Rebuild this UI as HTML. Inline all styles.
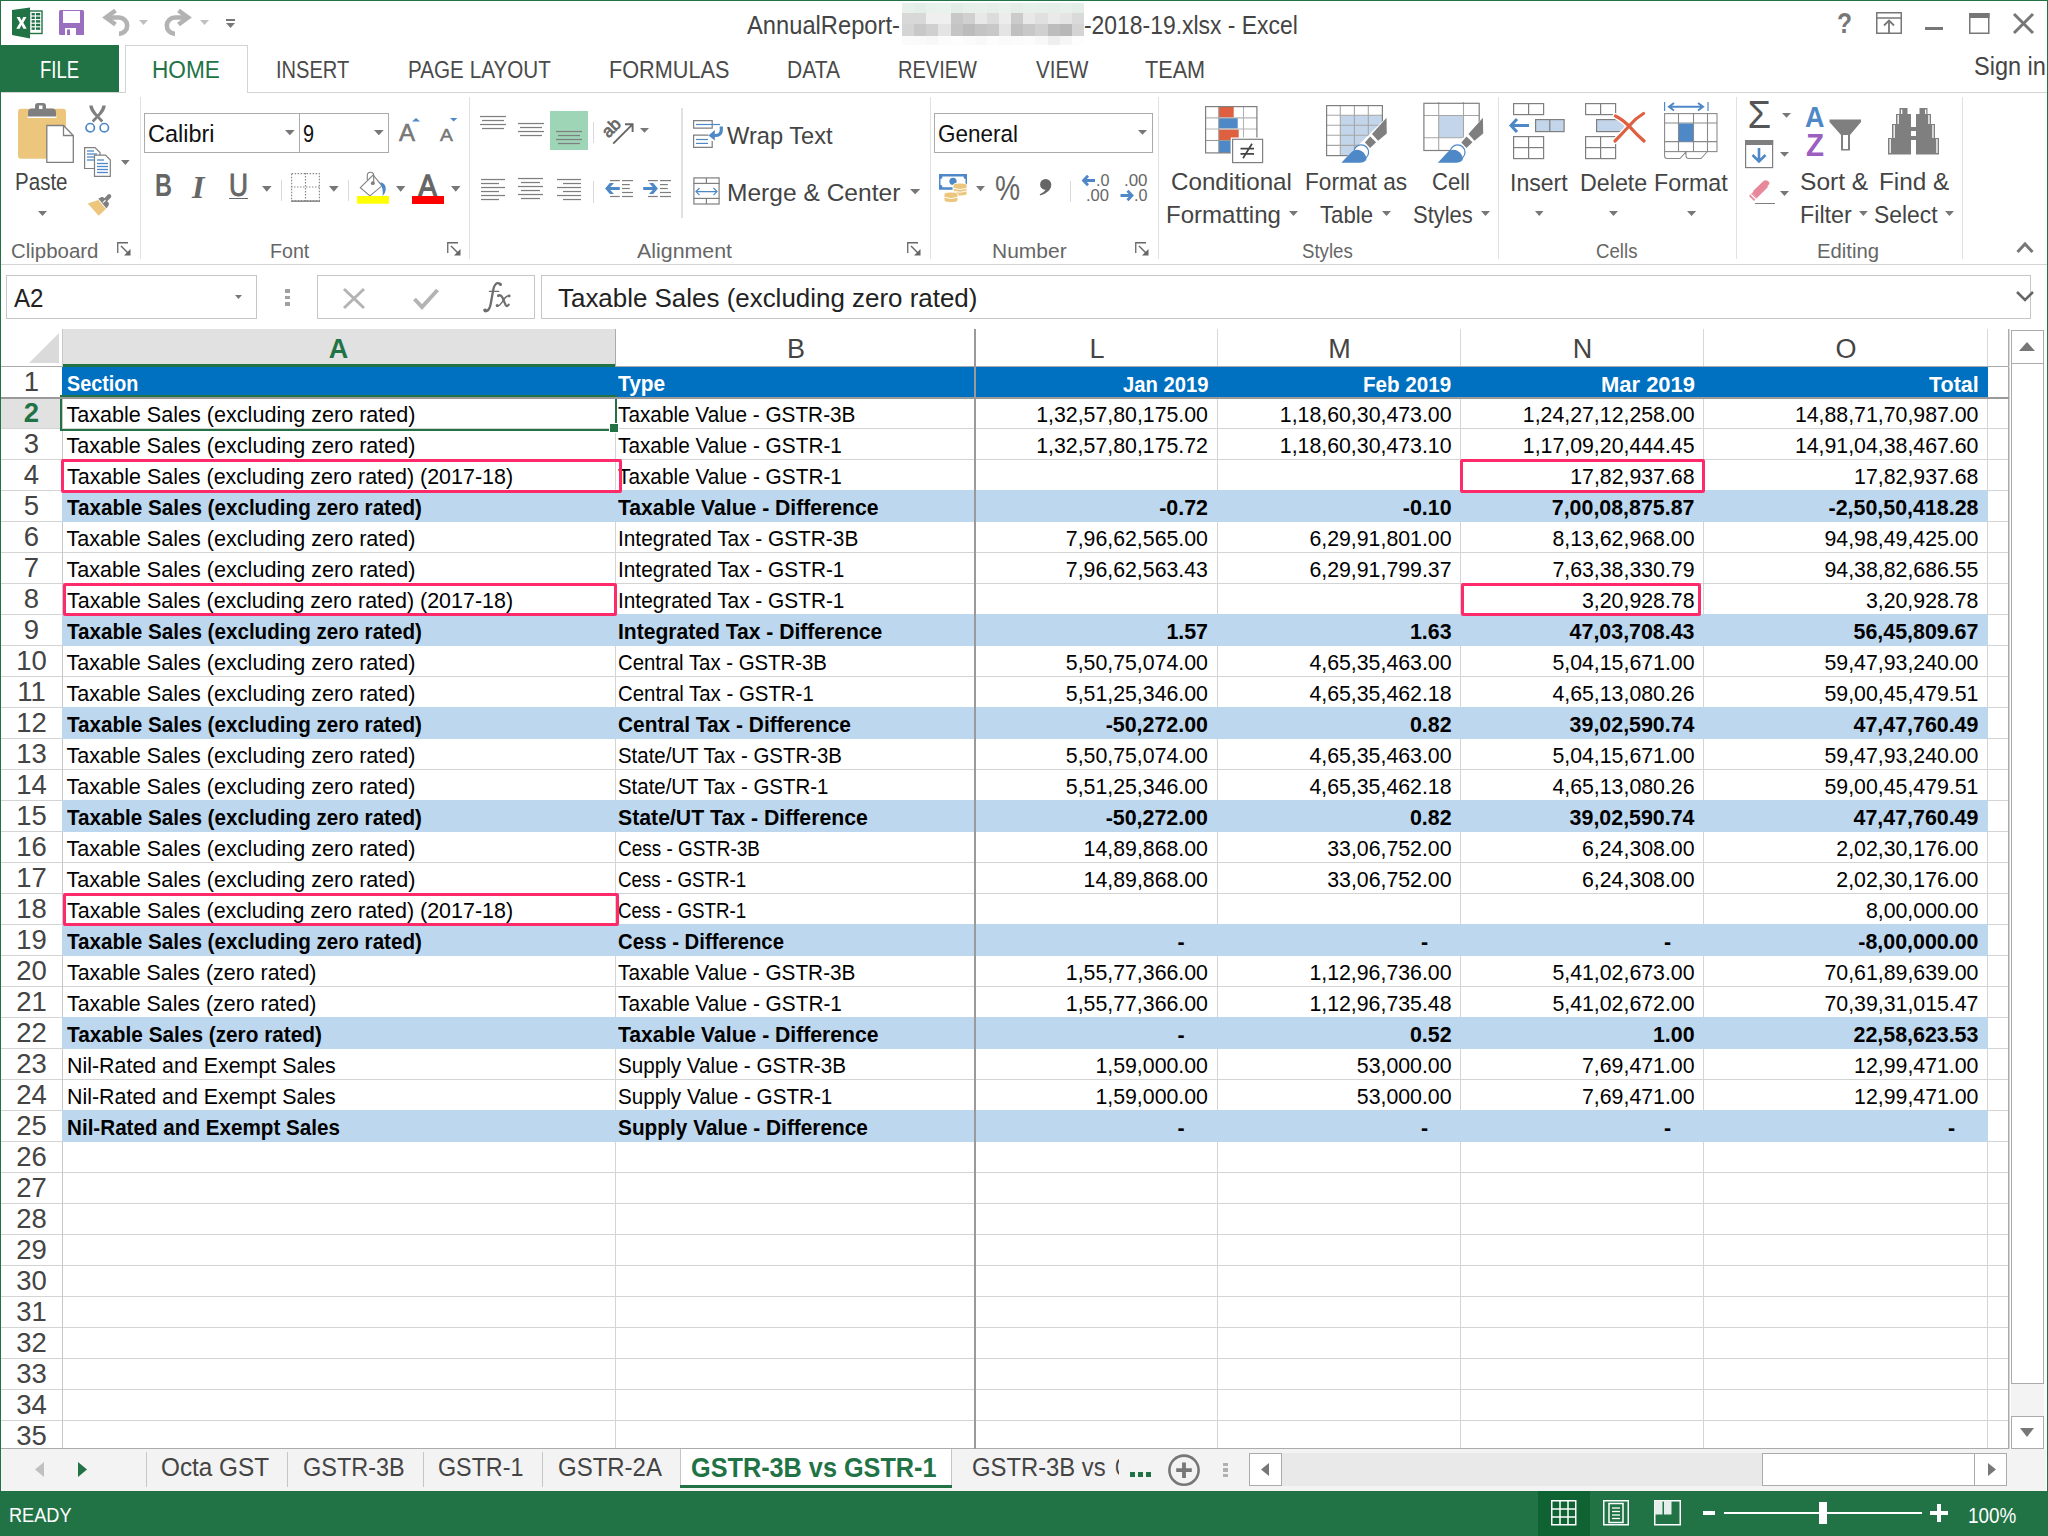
<!DOCTYPE html>
<html><head><meta charset="utf-8"><style>
html,body{margin:0;padding:0;}
body{width:2048px;height:1536px;overflow:hidden;position:relative;background:#fff;font-family:"Liberation Sans",sans-serif;}
.a{position:absolute;}
.t{position:absolute;white-space:pre;line-height:1;}
svg.a{overflow:visible;}
</style></head><body>
<svg class="a" style="left:12px;top:7px;" width="31" height="32" viewBox="0 0 31 32">
<rect x="17.5" y="4" width="12.5" height="22.5" fill="#fff" stroke="#217346" stroke-width="1.4"/>
<g fill="#217346"><rect x="19.6" y="6" width="3.2" height="2.4"/><rect x="24" y="6" width="4.2" height="2.4"/><rect x="19.6" y="9.6" width="3.2" height="2.4"/><rect x="24" y="9.6" width="4.2" height="2.4"/><rect x="19.6" y="13.2" width="3.2" height="2.4"/><rect x="24" y="13.2" width="4.2" height="2.4"/><rect x="19.6" y="16.8" width="3.2" height="2.4"/><rect x="24" y="16.8" width="4.2" height="2.4"/><rect x="19.6" y="20.4" width="3.2" height="2.4"/><rect x="24" y="20.4" width="4.2" height="2.4"/></g>
<polygon points="0,3 18,0.5 18,31.5 0,28" fill="#217346"/>
<path d="M4.5,10 H7.8 L9.5,13.6 L11.3,10 H14.5 L11.3,15.8 L14.7,21.8 H11.4 L9.5,18 L7.6,21.8 H4.3 L7.8,15.8Z" fill="#fff"/>
</svg>
<svg class="a" style="left:59px;top:10px;" width="25" height="25" viewBox="0 0 25 25"><path d="M1.5,0 H23.5 Q25,0 25,1.5 V25 H1.5 Q0,25 0,23.5 V1.5 Q0,0 1.5,0Z" fill="#9b6fc0"/>
<rect x="4" y="1" width="17" height="12" fill="#fff"/><rect x="6" y="18" width="11" height="7" fill="#fff"/><rect x="8" y="19.5" width="3" height="5.5" fill="#9b6fc0"/></svg>
<svg class="a" style="left:103px;top:9px;" width="27" height="27" viewBox="0 0 27 27"><path d="M12.5,1.5 L3,8.5 L12.5,15.5" fill="none" stroke="#b3b3b3" stroke-width="4.6" stroke-linejoin="miter" stroke-miterlimit="10"/>
<path d="M4,8.5 H16 A8.2,8.2 0 0 1 16,24.9" fill="none" stroke="#b3b3b3" stroke-width="4.6"/></svg>
<svg class="a" style="left:139px;top:20px;" width="9" height="5" viewBox="0 0 9 5"><polygon points="0,0 9,0 4.5,5" fill="#c0c0c0"/></svg>
<svg class="a" style="left:165px;top:9px;" width="27" height="27" viewBox="0 0 27 27"><path d="M13.5,1.5 L23,8.5 L13.5,15.5" fill="none" stroke="#b3b3b3" stroke-width="4.6" stroke-linejoin="miter" stroke-miterlimit="10"/>
<path d="M22,8.5 H10 A8.2,8.2 0 0 0 10,24.9" fill="none" stroke="#b3b3b3" stroke-width="4.6"/></svg>
<svg class="a" style="left:200px;top:20px;" width="9" height="5" viewBox="0 0 9 5"><polygon points="0,0 9,0 4.5,5" fill="#c0c0c0"/></svg>
<div class="a" style="left:226px;top:19px;width:9px;height:1.5px;background:#777;"></div>
<svg class="a" style="left:226px;top:23px;" width="9" height="5" viewBox="0 0 9 5"><polygon points="0,0 9,0 4.5,5" fill="#777"/></svg>
<div class="t" style="left:747.30px;top:11.50px;font-size:26.16px;color:#444444;transform:scaleX(0.9067);transform-origin:0 0;">AnnualReport-</div>
<div class="t" style="left:1084.00px;top:11.50px;font-size:26.16px;color:#444444;transform:scaleX(0.8754);transform-origin:0 0;">-2018-19.xlsx - Excel</div>
<div class="a" style="left:902.0px;top:3px;width:12.2px;height:9.5px;background:#e8f0eb;"></div>
<div class="a" style="left:902.0px;top:12.5px;width:12.2px;height:11.7px;background:#d8d8d8;"></div>
<div class="a" style="left:902.0px;top:24.2px;width:12.2px;height:11.7px;background:#d4d4d4;"></div>
<div class="a" style="left:902.0px;top:35.9px;width:12.2px;height:8.8px;background:#fbfbfb;"></div>
<div class="a" style="left:914.13px;top:3px;width:12.2px;height:9.5px;background:#e4eee8;"></div>
<div class="a" style="left:914.13px;top:12.5px;width:12.2px;height:11.7px;background:#d8d8d8;"></div>
<div class="a" style="left:914.13px;top:24.2px;width:12.2px;height:11.7px;background:#c8c8c8;"></div>
<div class="a" style="left:914.13px;top:35.9px;width:12.2px;height:8.8px;background:#fafafa;"></div>
<div class="a" style="left:926.26px;top:3px;width:12.2px;height:9.5px;background:#e9f1ec;"></div>
<div class="a" style="left:926.26px;top:12.5px;width:12.2px;height:11.7px;background:#efefef;"></div>
<div class="a" style="left:926.26px;top:24.2px;width:12.2px;height:11.7px;background:#d0d0d0;"></div>
<div class="a" style="left:926.26px;top:35.9px;width:12.2px;height:8.8px;background:#f8f8f8;"></div>
<div class="a" style="left:938.39px;top:3px;width:12.2px;height:9.5px;background:#eaf2ed;"></div>
<div class="a" style="left:938.39px;top:12.5px;width:12.2px;height:11.7px;background:#efefef;"></div>
<div class="a" style="left:938.39px;top:24.2px;width:12.2px;height:11.7px;background:#e4e4e4;"></div>
<div class="a" style="left:938.39px;top:35.9px;width:12.2px;height:8.8px;background:#fcfcfc;"></div>
<div class="a" style="left:950.52px;top:3px;width:12.2px;height:9.5px;background:#e3ede7;"></div>
<div class="a" style="left:950.52px;top:12.5px;width:12.2px;height:11.7px;background:#c8c8c8;"></div>
<div class="a" style="left:950.52px;top:24.2px;width:12.2px;height:11.7px;background:#c4c4c4;"></div>
<div class="a" style="left:950.52px;top:35.9px;width:12.2px;height:8.8px;background:#fdfdfd;"></div>
<div class="a" style="left:962.65px;top:3px;width:12.2px;height:9.5px;background:#e6efe9;"></div>
<div class="a" style="left:962.65px;top:12.5px;width:12.2px;height:11.7px;background:#d0d0d0;"></div>
<div class="a" style="left:962.65px;top:24.2px;width:12.2px;height:11.7px;background:#bcbcbc;"></div>
<div class="a" style="left:962.65px;top:35.9px;width:12.2px;height:8.8px;background:#fbfbfb;"></div>
<div class="a" style="left:974.78px;top:3px;width:12.2px;height:9.5px;background:#e9f0ec;"></div>
<div class="a" style="left:974.78px;top:12.5px;width:12.2px;height:11.7px;background:#e8e8e8;"></div>
<div class="a" style="left:974.78px;top:24.2px;width:12.2px;height:11.7px;background:#c4c4c4;"></div>
<div class="a" style="left:974.78px;top:35.9px;width:12.2px;height:8.8px;background:#f9f9f9;"></div>
<div class="a" style="left:986.91px;top:3px;width:12.2px;height:9.5px;background:#e5eee8;"></div>
<div class="a" style="left:986.91px;top:12.5px;width:12.2px;height:11.7px;background:#dcdcdc;"></div>
<div class="a" style="left:986.91px;top:24.2px;width:12.2px;height:11.7px;background:#c8c8c8;"></div>
<div class="a" style="left:986.91px;top:35.9px;width:12.2px;height:8.8px;background:#fdfdfd;"></div>
<div class="a" style="left:999.04px;top:3px;width:12.2px;height:9.5px;background:#eaf1ed;"></div>
<div class="a" style="left:999.04px;top:12.5px;width:12.2px;height:11.7px;background:#ececec;"></div>
<div class="a" style="left:999.04px;top:24.2px;width:12.2px;height:11.7px;background:#e4e4e4;"></div>
<div class="a" style="left:999.04px;top:35.9px;width:12.2px;height:8.8px;background:#fafafa;"></div>
<div class="a" style="left:1011.17px;top:3px;width:12.2px;height:9.5px;background:#e4ede7;"></div>
<div class="a" style="left:1011.17px;top:12.5px;width:12.2px;height:11.7px;background:#cbcbcb;"></div>
<div class="a" style="left:1011.17px;top:24.2px;width:12.2px;height:11.7px;background:#c0c0c0;"></div>
<div class="a" style="left:1011.17px;top:35.9px;width:12.2px;height:8.8px;background:#fbfbfb;"></div>
<div class="a" style="left:1023.3px;top:3px;width:12.2px;height:9.5px;background:#e8f0eb;"></div>
<div class="a" style="left:1023.3px;top:12.5px;width:12.2px;height:11.7px;background:#e8e8e8;"></div>
<div class="a" style="left:1023.3px;top:24.2px;width:12.2px;height:11.7px;background:#c8c8c8;"></div>
<div class="a" style="left:1023.3px;top:35.9px;width:12.2px;height:8.8px;background:#fcfcfc;"></div>
<div class="a" style="left:1035.43px;top:3px;width:12.2px;height:9.5px;background:#e6efe9;"></div>
<div class="a" style="left:1035.43px;top:12.5px;width:12.2px;height:11.7px;background:#e0e0e0;"></div>
<div class="a" style="left:1035.43px;top:24.2px;width:12.2px;height:11.7px;background:#d0d0d0;"></div>
<div class="a" style="left:1035.43px;top:35.9px;width:12.2px;height:8.8px;background:#f8f8f8;"></div>
<div class="a" style="left:1047.56px;top:3px;width:12.2px;height:9.5px;background:#e5eee8;"></div>
<div class="a" style="left:1047.56px;top:12.5px;width:12.2px;height:11.7px;background:#eaeaea;"></div>
<div class="a" style="left:1047.56px;top:24.2px;width:12.2px;height:11.7px;background:#bdbdbd;"></div>
<div class="a" style="left:1047.56px;top:35.9px;width:12.2px;height:8.8px;background:#eeeeee;"></div>
<div class="a" style="left:1059.69px;top:3px;width:12.2px;height:9.5px;background:#e8f0eb;"></div>
<div class="a" style="left:1059.69px;top:12.5px;width:12.2px;height:11.7px;background:#e4e4e4;"></div>
<div class="a" style="left:1059.69px;top:24.2px;width:12.2px;height:11.7px;background:#b8b8b8;"></div>
<div class="a" style="left:1059.69px;top:35.9px;width:12.2px;height:8.8px;background:#f6f6f6;"></div>
<div class="a" style="left:1071.82px;top:3px;width:12.2px;height:9.5px;background:#e4ede8;"></div>
<div class="a" style="left:1071.82px;top:12.5px;width:12.2px;height:11.7px;background:#dadada;"></div>
<div class="a" style="left:1071.82px;top:24.2px;width:12.2px;height:11.7px;background:#d4d4d4;"></div>
<div class="a" style="left:1071.82px;top:35.9px;width:12.2px;height:8.8px;background:#fdfdfd;"></div>
<div class="t" style="left:1836.70px;top:8.54px;font-size:29.07px;color:#777;font-weight:bold;transform:scaleX(0.8459);transform-origin:0 0;">?</div>
<svg class="a" style="left:1876px;top:12px;" width="26" height="22" viewBox="0 0 26 22"><rect x="0.75" y="0.75" width="24.5" height="20.5" fill="none" stroke="#777" stroke-width="1.5"/>
<line x1="0.75" y1="6" x2="25" y2="6" stroke="#777" stroke-width="1.5"/>
<line x1="13" y1="9" x2="13" y2="21" stroke="#777" stroke-width="1.8"/><path d="M8,13.5 Q11,10.5 13,8.5 Q15,10.5 18,13.5" fill="none" stroke="#777" stroke-width="1.8"/></svg>
<div class="a" style="left:1925px;top:26.5px;width:18px;height:3.5px;background:#777;"></div>
<svg class="a" style="left:1969px;top:12.5px;" width="21" height="21" viewBox="0 0 21 21"><rect x="0.75" y="0.75" width="19" height="19.5" fill="none" stroke="#777" stroke-width="1.5"/><rect x="0" y="0" width="20.5" height="5" fill="#777"/></svg>
<svg class="a" style="left:2013px;top:12.5px;" width="21" height="21" viewBox="0 0 21 21"><path d="M1,1 L20,20 M20,1 L1,20" stroke="#777" stroke-width="3"/></svg>
<div class="t" style="left:1974.00px;top:54.16px;font-size:25.15px;color:#444444;transform:scaleX(0.9357);transform-origin:0 0;">Sign in</div>
<div class="a" style="left:0px;top:45px;width:119px;height:48px;background:#217346;"></div>
<div class="t" style="left:40.25px;top:59.16px;font-size:23.26px;color:#fff;transform:scaleX(0.7968);transform-origin:0 0;">FILE</div>
<div class="a" style="left:125px;top:45px;width:122.5px;height:48px;background:#fff;border:1px solid #d4d4d4;border-bottom:none;box-sizing:border-box;"></div>
<div class="t" style="left:151.70px;top:57.75px;font-size:24.56px;color:#217346;transform:scaleX(0.9214);transform-origin:0 0;">HOME</div>
<div class="t" style="left:276.20px;top:57.75px;font-size:24.56px;color:#4a4a4a;transform:scaleX(0.8175);transform-origin:0 0;">INSERT</div>
<div class="t" style="left:408.00px;top:57.75px;font-size:24.56px;color:#4a4a4a;transform:scaleX(0.8419);transform-origin:0 0;">PAGE LAYOUT</div>
<div class="t" style="left:608.50px;top:57.75px;font-size:24.56px;color:#4a4a4a;transform:scaleX(0.8831);transform-origin:0 0;">FORMULAS</div>
<div class="t" style="left:787.00px;top:57.75px;font-size:24.56px;color:#4a4a4a;transform:scaleX(0.8562);transform-origin:0 0;">DATA</div>
<div class="t" style="left:898.00px;top:57.75px;font-size:24.56px;color:#4a4a4a;transform:scaleX(0.8152);transform-origin:0 0;">REVIEW</div>
<div class="t" style="left:1035.50px;top:57.75px;font-size:24.56px;color:#4a4a4a;transform:scaleX(0.8365);transform-origin:0 0;">VIEW</div>
<div class="t" style="left:1144.80px;top:57.75px;font-size:24.56px;color:#4a4a4a;transform:scaleX(0.8816);transform-origin:0 0;">TEAM</div>
<div class="a" style="left:0px;top:92px;width:125px;height:1px;background:#d4d4d4;"></div>
<div class="a" style="left:247px;top:92px;width:1801px;height:1px;background:#d4d4d4;"></div>
<div class="a" style="left:0px;top:264px;width:2048px;height:1px;background:#d4d4d4;"></div>
<div class="a" style="left:6px;top:275px;width:251px;height:44px;background:#fff;border:1px solid #c6c6c6;box-sizing:border-box;"></div>
<div class="t" style="left:13.70px;top:285.71px;font-size:25.44px;color:#222;transform:scaleX(0.9468);transform-origin:0 0;">A2</div>
<svg class="a" style="left:235px;top:295px;" width="7" height="4" viewBox="0 0 7 4"><polygon points="0,0 7,0 3.5,4" fill="#777"/></svg>
<div class="a" style="left:285px;top:289px;width:4.5px;height:3.5px;background:#a0a0a0;"></div>
<div class="a" style="left:285px;top:295.5px;width:4.5px;height:3.5px;background:#a0a0a0;"></div>
<div class="a" style="left:285px;top:302px;width:4.5px;height:3.5px;background:#a0a0a0;"></div>
<div class="a" style="left:317px;top:275px;width:218px;height:44px;background:#fff;border:1px solid #c6c6c6;box-sizing:border-box;"></div>
<svg class="a" style="left:343px;top:288px;" width="22" height="21" viewBox="0 0 22 21"><path d="M1,1 L21,20 M21,1 L1,20" stroke="#b4b4b4" stroke-width="3"/></svg>
<svg class="a" style="left:413px;top:288px;" width="26" height="21" viewBox="0 0 26 21"><path d="M1.5,11 L9,19 L24.5,2" fill="none" stroke="#b4b4b4" stroke-width="4"/></svg>
<svg class="a" style="left:470px;top:275px;" width="60" height="45" viewBox="0 0 60 45"><g fill="none" stroke="#6e6e6e" stroke-linecap="round"><path d="M30.8,9.6 Q29.5,7.6 27,8.2 Q24.2,9.4 23.2,15 L20.8,28.5 Q19.6,35.3 16.2,36.2 Q14.6,36.5 14.4,35" stroke-width="2.3"/><line x1="19.4" y1="16.4" x2="28.8" y2="16.4" stroke-width="1.3"/><path d="M28.2,20.6 Q30.8,19.2 32.6,22.8 L35.6,30 Q36.8,32.3 38.7,29.6" stroke-width="2.2"/><path d="M39.3,20.4 Q36.3,20.6 33.4,25 Q30.4,30.6 27.4,31.2" stroke-width="1.5"/></g><g fill="#6e6e6e"><circle cx="30.2" cy="9.3" r="1.5"/><circle cx="15.4" cy="35.2" r="1.6"/><circle cx="28.4" cy="20.8" r="1.4"/><circle cx="39.2" cy="21" r="1.4"/><circle cx="27.2" cy="30.6" r="1.5"/></g></svg>
<div class="a" style="left:541px;top:275px;width:1490px;height:44px;background:#fff;border:1px solid #c6c6c6;box-sizing:border-box;"></div>
<div class="t" style="left:557.50px;top:284.80px;font-size:26.16px;color:#222;transform:scaleX(0.9913);transform-origin:0 0;">Taxable Sales (excluding zero rated)</div>
<svg class="a" style="left:2016px;top:291px;" width="18" height="11" viewBox="0 0 18 11"><path d="M1,1 L9,9 L17,1" fill="none" stroke="#666" stroke-width="2.5"/></svg>
<div class="a" style="left:1px;top:1449px;width:2045px;height:42px;background:#f3f3f3;"></div>
<svg class="a" style="left:35px;top:1462px;" width="9" height="15" viewBox="0 0 9 15"><polygon points="9,0 9,15 0,7.5" fill="#c0c0c0"/></svg>
<svg class="a" style="left:78px;top:1462px;" width="9" height="15" viewBox="0 0 9 15"><polygon points="0,0 0,15 9,7.5" fill="#217346"/></svg>
<div class="a" style="left:146px;top:1452px;width:1px;height:35px;background:#c6c6c6;"></div>
<div class="a" style="left:286.5px;top:1452px;width:1px;height:35px;background:#c6c6c6;"></div>
<div class="a" style="left:422.5px;top:1452px;width:1px;height:35px;background:#c6c6c6;"></div>
<div class="a" style="left:541.5px;top:1452px;width:1px;height:35px;background:#c6c6c6;"></div>
<div class="t" style="left:161.30px;top:1455.11px;font-size:25.44px;color:#444444;transform:scaleX(0.9552);transform-origin:0 0;">Octa GST</div>
<div class="t" style="left:303.00px;top:1455.11px;font-size:25.44px;color:#444444;transform:scaleX(0.9223);transform-origin:0 0;">GSTR-3B</div>
<div class="t" style="left:437.50px;top:1455.11px;font-size:25.44px;color:#444444;transform:scaleX(0.9150);transform-origin:0 0;">GSTR-1</div>
<div class="t" style="left:557.80px;top:1455.11px;font-size:25.44px;color:#444444;transform:scaleX(0.9423);transform-origin:0 0;">GSTR-2A</div>
<div class="a" style="left:679.5px;top:1448px;width:272.5px;height:40px;background:#fff;border:1px solid #c6c6c6;border-top:none;box-sizing:border-box;"></div>
<div class="a" style="left:679.5px;top:1485px;width:272.5px;height:3px;background:#217346;"></div>
<div class="t" style="left:691.40px;top:1453.87px;font-size:27.62px;color:#217346;font-weight:bold;transform:scaleX(0.9145);transform-origin:0 0;">GSTR-3B vs GSTR-1</div>
<div class="t" style="left:972.30px;top:1455.11px;font-size:25.44px;color:#444444;transform:scaleX(0.9363);transform-origin:0 0;">GSTR-3B vs</div>
<div class="t" style="left:1115.00px;top:1455.11px;font-size:25.44px;color:#444444;transform:scaleX(0.7560);transform-origin:0 0;">G</div>
<div class="a" style="left:1119px;top:1449px;width:10px;height:37px;background:#f3f3f3;"></div>
<div class="a" style="left:1130px;top:1472px;width:4.5px;height:5px;background:#217346;"></div>
<div class="a" style="left:1138px;top:1472px;width:4.5px;height:5px;background:#217346;"></div>
<div class="a" style="left:1146px;top:1472px;width:4.5px;height:5px;background:#217346;"></div>
<svg class="a" style="left:1168px;top:1454px;" width="33" height="33" viewBox="0 0 33 33"><circle cx="16" cy="16.2" r="14.6" fill="none" stroke="#777" stroke-width="2.6"/><path d="M16,8.5 V24 M8.2,16.2 H23.8" stroke="#777" stroke-width="3.8"/></svg>
<div class="a" style="left:1223px;top:1462.5px;width:5px;height:3.5px;background:#b0b0b0;"></div>
<div class="a" style="left:1223px;top:1468px;width:5px;height:3.5px;background:#b0b0b0;"></div>
<div class="a" style="left:1223px;top:1473.5px;width:5px;height:3.5px;background:#b0b0b0;"></div>
<div class="a" style="left:1249px;top:1453px;width:758px;height:33px;background:#e9e9e9;"></div>
<div class="a" style="left:1249px;top:1453px;width:33px;height:33px;background:#fff;border:1px solid #ababab;box-sizing:border-box;"></div>
<svg class="a" style="left:1261px;top:1463px;" width="8" height="13" viewBox="0 0 8 13"><polygon points="8,0 8,13 0,6.5" fill="#777"/></svg>
<div class="a" style="left:1762px;top:1453px;width:213px;height:33px;background:#fff;border:1px solid #ababab;box-sizing:border-box;"></div>
<div class="a" style="left:1974px;top:1453px;width:33px;height:33px;background:#fff;border:1px solid #ababab;box-sizing:border-box;"></div>
<svg class="a" style="left:1988px;top:1463px;" width="8" height="13" viewBox="0 0 8 13"><polygon points="0,0 0,13 8,6.5" fill="#777"/></svg>
<div class="a" style="left:0px;top:1491px;width:2048px;height:45px;background:#217346;"></div>
<div class="t" style="left:9.00px;top:1503.86px;font-size:21.08px;color:#fff;transform:scaleX(0.8622);transform-origin:0 0;">READY</div>
<div class="a" style="left:1538px;top:1491px;width:52px;height:45px;background:#0f6333;"></div>
<svg class="a" style="left:1551px;top:1500px;" width="26" height="26" viewBox="0 0 26 26"><g fill="none" stroke="#fff" stroke-width="1.5"><rect x="0.75" y="0.75" width="24" height="24"/><line x1="9" y1="0" x2="9" y2="25"/><line x1="17" y1="0" x2="17" y2="25"/><line x1="0" y1="9" x2="25" y2="9"/><line x1="0" y1="17" x2="25" y2="17"/></g></svg>
<svg class="a" style="left:1603px;top:1500px;" width="26" height="26" viewBox="0 0 26 26"><g fill="none" stroke="#fff" stroke-width="1.5"><rect x="0.75" y="0.75" width="24.5" height="24"/><rect x="6" y="3.5" width="14" height="19"/></g><g stroke="#fff" stroke-width="1.3"><line x1="9" y1="8" x2="17" y2="8"/><line x1="9" y1="11.5" x2="17" y2="11.5"/><line x1="9" y1="15" x2="17" y2="15"/><line x1="9" y1="18.5" x2="17" y2="18.5"/></g></svg>
<svg class="a" style="left:1654px;top:1500px;" width="27" height="26" viewBox="0 0 27 26"><rect x="0.75" y="0.75" width="25.5" height="24" fill="none" stroke="#fff" stroke-width="1.5"/><rect x="0.5" y="0.5" width="8" height="14" fill="#e6eee9"/><rect x="10" y="0.5" width="7.5" height="14" fill="#e6eee9"/></svg>
<div class="a" style="left:1703px;top:1510.5px;width:12px;height:4.5px;background:#fff;"></div>
<div class="a" style="left:1724px;top:1512px;width:198px;height:2px;background:#fff;"></div>
<div class="a" style="left:1819px;top:1502px;width:8px;height:22px;background:#fff;"></div>
<svg class="a" style="left:1930px;top:1504px;" width="18" height="18" viewBox="0 0 18 18"><path d="M9,0 V18 M0,9 H18" stroke="#fff" stroke-width="4"/></svg>
<div class="t" style="left:1968.00px;top:1504.54px;font-size:21.80px;color:#fff;transform:scaleX(0.8654);transform-origin:0 0;">100%</div>
<div class="a" style="left:2011px;top:330px;width:33px;height:1119px;background:#f3f3f3;"></div>
<div class="a" style="left:2011px;top:330px;width:33px;height:34px;background:#fff;border:1px solid #ababab;box-sizing:border-box;"></div>
<svg class="a" style="left:2019px;top:342px;" width="16" height="9" viewBox="0 0 16 9"><polygon points="0,9 16,9 8,0" fill="#777"/></svg>
<div class="a" style="left:2011px;top:363px;width:33px;height:1021px;background:#fff;border:1px solid #ababab;box-sizing:border-box;"></div>
<div class="a" style="left:2011px;top:1416px;width:33px;height:33px;background:#fff;border:1px solid #ababab;box-sizing:border-box;"></div>
<svg class="a" style="left:2020px;top:1428px;" width="14" height="9" viewBox="0 0 14 9"><polygon points="0,0 14,0 7,9" fill="#777"/></svg>
<div class="a" style="left:139.5px;top:97px;width:1px;height:162px;background:#e1e1e1;"></div>
<div class="a" style="left:468.5px;top:97px;width:1px;height:162px;background:#e1e1e1;"></div>
<div class="a" style="left:929.5px;top:97px;width:1px;height:162px;background:#e1e1e1;"></div>
<div class="a" style="left:1157.5px;top:97px;width:1px;height:162px;background:#e1e1e1;"></div>
<div class="a" style="left:1497.5px;top:97px;width:1px;height:162px;background:#e1e1e1;"></div>
<div class="a" style="left:1735.5px;top:97px;width:1px;height:162px;background:#e1e1e1;"></div>
<div class="a" style="left:1961.5px;top:97px;width:1px;height:162px;background:#e1e1e1;"></div>
<div class="t" style="left:10.80px;top:239.66px;font-size:21.08px;color:#666666;transform:scaleX(0.9689);transform-origin:0 0;">Clipboard</div>
<div class="t" style="left:269.70px;top:239.66px;font-size:21.08px;color:#666666;transform:scaleX(0.9300);transform-origin:0 0;">Font</div>
<div class="t" style="left:636.70px;top:239.66px;font-size:21.08px;color:#666666;transform:scaleX(1.0141);transform-origin:0 0;">Alignment</div>
<div class="t" style="left:991.60px;top:239.66px;font-size:21.08px;color:#666666;transform:scaleX(0.9957);transform-origin:0 0;">Number</div>
<div class="t" style="left:1301.60px;top:239.66px;font-size:21.08px;color:#666666;transform:scaleX(0.8845);transform-origin:0 0;">Styles</div>
<div class="t" style="left:1595.70px;top:239.66px;font-size:21.08px;color:#666666;transform:scaleX(0.8850);transform-origin:0 0;">Cells</div>
<div class="t" style="left:1817.30px;top:239.66px;font-size:21.08px;color:#666666;transform:scaleX(0.9629);transform-origin:0 0;">Editing</div>
<svg class="a" style="left:117px;top:242px;" width="14" height="14" viewBox="0 0 14 14"><path d="M0.75,11 V0.75 H11" fill="none" stroke="#666666" stroke-width="1.3"/><path d="M4,4 L12,12" stroke="#666666" stroke-width="1.5"/><polygon points="13.5,7 13.5,13.5 7,13.5" fill="#666666"/></svg>
<svg class="a" style="left:447px;top:242px;" width="14" height="14" viewBox="0 0 14 14"><path d="M0.75,11 V0.75 H11" fill="none" stroke="#666666" stroke-width="1.3"/><path d="M4,4 L12,12" stroke="#666666" stroke-width="1.5"/><polygon points="13.5,7 13.5,13.5 7,13.5" fill="#666666"/></svg>
<svg class="a" style="left:907px;top:242px;" width="14" height="14" viewBox="0 0 14 14"><path d="M0.75,11 V0.75 H11" fill="none" stroke="#666666" stroke-width="1.3"/><path d="M4,4 L12,12" stroke="#666666" stroke-width="1.5"/><polygon points="13.5,7 13.5,13.5 7,13.5" fill="#666666"/></svg>
<svg class="a" style="left:1135px;top:242px;" width="14" height="14" viewBox="0 0 14 14"><path d="M0.75,11 V0.75 H11" fill="none" stroke="#666666" stroke-width="1.3"/><path d="M4,4 L12,12" stroke="#666666" stroke-width="1.5"/><polygon points="13.5,7 13.5,13.5 7,13.5" fill="#666666"/></svg>
<svg class="a" style="left:2016px;top:242px;" width="18" height="11" viewBox="0 0 18 11"><path d="M1.5,10 L9,2 L16.5,10" fill="none" stroke="#777" stroke-width="3"/></svg>
<svg class="a" style="left:18px;top:103px;" width="56" height="60" viewBox="0 0 56 60">
<rect x="0" y="5.8" width="48" height="50" rx="3" fill="#edc67e"/>
<path d="M10,9 Q10,5.5 14,5.5 H17 V3 Q17,0 20,0 H25 Q28,0 28,3 V5.5 H34 Q38,5.5 38,9 V14 H10Z" fill="#7f7f7f"/>
<rect x="21" y="2.5" width="3.5" height="3.5" fill="#fff"/>
<rect x="9.5" y="13.5" width="29" height="1.5" fill="#fff"/>
<path d="M28.8,22.5 H45.5 L55.3,32.5 V59.3 H28.8Z" fill="#fff" stroke="#7f7f7f" stroke-width="1.3"/>
<path d="M45.5,22.5 V32.5 H55.3" fill="none" stroke="#7f7f7f" stroke-width="1.3"/>
</svg>
<div class="t" style="left:15.20px;top:170.69px;font-size:23.69px;color:#444444;transform:scaleX(0.8673);transform-origin:0 0;">Paste</div>
<svg class="a" style="left:38px;top:211px;" width="9" height="5" viewBox="0 0 9 5"><polygon points="0,0 9,0 4.5,5" fill="#777777"/></svg>
<svg class="a" style="left:85px;top:105px;" width="25" height="28" viewBox="0 0 25 28">
<path d="M4.3,0.4 L7.6,0.4 Q8.5,5 13.5,10.5 L18.3,15.5 L16.3,17.5 L11.2,12 Q4.2,5.5 4.3,0.4Z" fill="#7f7f7f"/>
<path d="M20.7,0.4 L17.4,0.4 Q16.5,5 11.5,10.5 L6.7,15.5 L8.7,17.5 L13.8,12 Q20.8,5.5 20.7,0.4Z" fill="#7f7f7f"/>
<circle cx="5.2" cy="22.7" r="4.2" fill="#fff" stroke="#4e88c7" stroke-width="1.7"/>
<circle cx="19.3" cy="22.7" r="4.2" fill="#fff" stroke="#4e88c7" stroke-width="1.7"/>
</svg>
<svg class="a" style="left:84px;top:147px;" width="27" height="30" viewBox="0 0 27 30">
<path d="M0.6,0.6 H11 L16,5.6 V21.5 H0.6Z" fill="#fff" stroke="#7f7f7f" stroke-width="1.2"/>
<g stroke="#4e88c7" stroke-width="1.3"><line x1="3" y1="4" x2="10" y2="4"/><line x1="3" y1="7" x2="13" y2="7"/><line x1="3" y1="10" x2="13" y2="10"/><line x1="3" y1="13" x2="13" y2="13"/></g>
<path d="M10.5,8.2 H21.5 L26.3,13 V29.3 H10.5Z" fill="#fff" stroke="#7f7f7f" stroke-width="1.2"/>
<g stroke="#4e88c7" stroke-width="1.3"><line x1="13" y1="13" x2="20" y2="13"/><line x1="13" y1="16.5" x2="24" y2="16.5"/><line x1="13" y1="19.5" x2="24" y2="19.5"/><line x1="13" y1="22.5" x2="24" y2="22.5"/><line x1="13" y1="25.5" x2="24" y2="25.5"/></g>
</svg>
<svg class="a" style="left:121.3px;top:160px;" width="8.700000000000003" height="5" viewBox="0 0 8.700000000000003 5"><polygon points="0,0 8.700000000000003,0 4.350000000000001,5" fill="#777777"/></svg>
<svg class="a" style="left:86px;top:193px;" width="25" height="24" viewBox="0 0 25 24">
<polygon points="1.7,10.5 12.3,7.1 19.9,16 12.7,22.8" fill="#edc67e"/>
<path d="M12.3,5.4 L15.7,4.1 Q17,3.8 18,4.8 L22.4,9.5 Q23.3,10.5 22.8,12 L20.5,15.5 Z" fill="#7f7f7f"/>
<line x1="19.2" y1="7.4" x2="23.2" y2="3.2" stroke="#7f7f7f" stroke-width="4.2" stroke-linecap="round"/>
<line x1="17" y1="9.6" x2="19.5" y2="7.1" stroke="#fff" stroke-width="1.2"/>
</svg>
<div class="a" style="left:144px;top:113px;width:156px;height:40px;background:#fff;border:1px solid #ababab;box-sizing:border-box;"></div>
<div class="a" style="left:299px;top:113px;width:90px;height:40px;background:#fff;border:1px solid #ababab;box-sizing:border-box;"></div>
<div class="t" style="left:147.80px;top:123.31px;font-size:23.55px;color:#111;transform:scaleX(0.9962);transform-origin:0 0;">Calibri</div>
<div class="t" style="left:303.00px;top:123.31px;font-size:23.55px;color:#111;transform:scaleX(0.8417);transform-origin:0 0;">9</div>
<svg class="a" style="left:284.7px;top:130px;" width="9.699999999999989" height="5.300000000000011" viewBox="0 0 9.699999999999989 5.300000000000011"><polygon points="0,0 9.699999999999989,0 4.849999999999994,5.300000000000011" fill="#777777"/></svg>
<svg class="a" style="left:373.6px;top:130px;" width="9.699999999999989" height="5.300000000000011" viewBox="0 0 9.699999999999989 5.300000000000011"><polygon points="0,0 9.699999999999989,0 4.849999999999994,5.300000000000011" fill="#777777"/></svg>
<div class="t" style="left:399.40px;top:121.03px;font-size:24.71px;color:#777777;transform:scaleX(0.9725);transform-origin:0 0;-webkit-text-stroke:0.6px #777;">A</div>
<svg class="a" style="left:411.5px;top:118px;" width="8.100000000000023" height="3.5999999999999943" viewBox="0 0 8.100000000000023 3.5999999999999943"><polygon points="0,3.5999999999999943 8.100000000000023,3.5999999999999943 4.050000000000011,0" fill="#4e88c7"/></svg>
<div class="t" style="left:439.70px;top:127.80px;font-size:16.72px;color:#777777;transform:scaleX(1.1519);transform-origin:0 0;-webkit-text-stroke:0.5px #777;">A</div>
<svg class="a" style="left:450px;top:118px;" width="7.399999999999977" height="3.5999999999999943" viewBox="0 0 7.399999999999977 3.5999999999999943"><polygon points="0,0 7.399999999999977,0 3.6999999999999886,3.5999999999999943" fill="#4e88c7"/></svg>
<div class="t" style="left:154.50px;top:170.11px;font-size:30.52px;color:#666;font-weight:bold;transform:scaleX(0.7690);transform-origin:0 0;">B</div>
<div class="t" style="left:192px;top:171px;font-family:'Liberation Serif',serif;font-style:italic;font-weight:bold;font-size:32px;color:#666;">I</div>
<div class="t" style="left:229.10px;top:170.11px;font-size:30.52px;color:#666;transform:scaleX(0.8600);transform-origin:0 0;-webkit-text-stroke:0.9px #666;">U</div>
<div class="a" style="left:229px;top:197.5px;width:19px;height:1.5px;background:#666;"></div>
<svg class="a" style="left:261.7px;top:186px;" width="9.600000000000023" height="5.699999999999989" viewBox="0 0 9.600000000000023 5.699999999999989"><polygon points="0,0 9.600000000000023,0 4.800000000000011,5.699999999999989" fill="#777777"/></svg>
<div class="a" style="left:280.5px;top:180px;width:1px;height:21px;background:#d9d9d9;"></div>
<svg class="a" style="left:291px;top:173px;" width="29" height="29" viewBox="0 0 29 29"><g fill="none" stroke="#8a8a8a" stroke-width="1.2" stroke-dasharray="1.5,1.5"><rect x="0.6" y="0.6" width="27.8" height="27"/><line x1="14.5" y1="0" x2="14.5" y2="28"/><line x1="0" y1="14" x2="29" y2="14"/></g><line x1="0" y1="28.2" x2="29" y2="28.2" stroke="#8a8a8a" stroke-width="1.5"/></svg>
<svg class="a" style="left:328.8px;top:186px;" width="9.699999999999989" height="5.699999999999989" viewBox="0 0 9.699999999999989 5.699999999999989"><polygon points="0,0 9.699999999999989,0 4.849999999999994,5.699999999999989" fill="#777777"/></svg>
<div class="a" style="left:347.5px;top:180px;width:1px;height:21px;background:#d9d9d9;"></div>
<svg class="a" style="left:357px;top:172px;" width="33" height="33" viewBox="0 0 33 33">
<path d="M3.3,15.6 L16.1,3 L25,13.8 L12.9,23.8Z" fill="#fff" stroke="#7f7f7f" stroke-width="1.1"/>
<path d="M10.3,8 V3.5 Q10.3,0.3 13.5,0.3 Q16.7,0.3 16.7,3.5 V11" fill="none" stroke="#7f7f7f" stroke-width="1.1"/>
<circle cx="15.8" cy="11.2" r="1.9" fill="#7f7f7f"/>
<path d="M23.5,10.3 Q29.5,12 28.7,18 Q28.3,21.5 25.5,24 Q26.5,17 23.5,12Z" fill="#4e88c7"/>
<rect x="0" y="24" width="32" height="7.7" fill="#ffff00"/>
</svg>
<svg class="a" style="left:396.2px;top:186px;" width="9.400000000000034" height="5.699999999999989" viewBox="0 0 9.400000000000034 5.699999999999989"><polygon points="0,0 9.400000000000034,0 4.700000000000017,5.699999999999989" fill="#777777"/></svg>
<div class="t" style="left:418.00px;top:170.91px;font-size:30.52px;color:#666;transform:scaleX(0.9437);transform-origin:0 0;-webkit-text-stroke:1.3px #666;">A</div>
<div class="a" style="left:412px;top:196px;width:32px;height:8px;background:#ff0000;"></div>
<svg class="a" style="left:451px;top:186px;" width="9.5" height="5.699999999999989" viewBox="0 0 9.5 5.699999999999989"><polygon points="0,0 9.5,0 4.75,5.699999999999989" fill="#777777"/></svg>
<div class="a" style="left:550px;top:111px;width:38px;height:39px;background:#9fd5b7;"></div>
<svg class="a" style="left:470px;top:100px;" width="130" height="110" viewBox="0 0 130 110"><rect x="10.00" y="15.90" width="26.00" height="1.25" fill="#7f7f7f"/><rect x="12.00" y="19.90" width="22.00" height="1.25" fill="#7f7f7f"/><rect x="10.00" y="23.90" width="26.00" height="1.25" fill="#7f7f7f"/><rect x="12.00" y="27.90" width="22.00" height="1.25" fill="#7f7f7f"/><rect x="48.00" y="22.90" width="26.00" height="1.25" fill="#7f7f7f"/><rect x="50.00" y="26.90" width="22.00" height="1.25" fill="#7f7f7f"/><rect x="48.00" y="30.90" width="26.00" height="1.25" fill="#7f7f7f"/><rect x="50.00" y="34.90" width="22.00" height="1.25" fill="#7f7f7f"/><rect x="86.00" y="30.90" width="26.00" height="1.25" fill="#7f7f7f"/><rect x="88.00" y="34.90" width="22.00" height="1.25" fill="#7f7f7f"/><rect x="86.00" y="38.90" width="26.00" height="1.25" fill="#7f7f7f"/><rect x="88.00" y="42.90" width="22.00" height="1.25" fill="#7f7f7f"/><rect x="11.00" y="78.90" width="24.00" height="1.25" fill="#7f7f7f"/><rect x="11.00" y="82.90" width="18.00" height="1.25" fill="#7f7f7f"/><rect x="11.00" y="86.90" width="24.00" height="1.25" fill="#7f7f7f"/><rect x="11.00" y="90.90" width="18.00" height="1.25" fill="#7f7f7f"/><rect x="11.00" y="94.90" width="24.00" height="1.25" fill="#7f7f7f"/><rect x="11.00" y="98.90" width="18.00" height="1.25" fill="#7f7f7f"/><rect x="48.00" y="77.90" width="25.00" height="1.25" fill="#7f7f7f"/><rect x="51.00" y="81.90" width="19.00" height="1.25" fill="#7f7f7f"/><rect x="48.00" y="85.90" width="25.00" height="1.25" fill="#7f7f7f"/><rect x="51.00" y="89.90" width="19.00" height="1.25" fill="#7f7f7f"/><rect x="48.00" y="93.90" width="25.00" height="1.25" fill="#7f7f7f"/><rect x="51.00" y="97.90" width="19.00" height="1.25" fill="#7f7f7f"/><rect x="87.00" y="78.90" width="24.00" height="1.25" fill="#7f7f7f"/><rect x="93.00" y="82.90" width="18.00" height="1.25" fill="#7f7f7f"/><rect x="87.00" y="86.90" width="24.00" height="1.25" fill="#7f7f7f"/><rect x="93.00" y="90.90" width="18.00" height="1.25" fill="#7f7f7f"/><rect x="87.00" y="94.90" width="24.00" height="1.25" fill="#7f7f7f"/><rect x="93.00" y="98.90" width="18.00" height="1.25" fill="#7f7f7f"/></svg>
<div class="a" style="left:593px;top:122px;width:1px;height:21px;background:#d9d9d9;"></div>
<svg class="a" style="left:605px;top:116px;" width="30" height="30" viewBox="0 0 30 30"><text x="0" y="0" transform="translate(3.5,22.5) rotate(-45)" font-family="Liberation Sans" font-size="17" fill="#666" stroke="#666" stroke-width="0.7">ab</text>
<path d="M8.2,27.6 L27.2,8.6 M20,8.3 H27.6 V16" fill="none" stroke="#666" stroke-width="1.9"/></svg>
<svg class="a" style="left:640px;top:128.3px;" width="9" height="4.699999999999989" viewBox="0 0 9 4.699999999999989"><polygon points="0,0 9,0 4.5,4.699999999999989" fill="#777777"/></svg>
<div class="a" style="left:681px;top:108px;width:2px;height:110px;background:#e1e1e1;"></div>
<svg class="a" style="left:693px;top:120px;" width="31" height="29" viewBox="0 0 31 29"><path d="M0.6,0.6 H19.2 V8.2 H0.6Z" fill="none" stroke="#7f7f7f" stroke-width="1.2"/><path d="M15.5,15.2 H0.6 V27.3 H19.2 V21" fill="none" stroke="#7f7f7f" stroke-width="1.2"/>
<line x1="3" y1="4.5" x2="27" y2="4.5" stroke="#4e88c7" stroke-width="1.2"/><line x1="3" y1="19.5" x2="15" y2="19.5" stroke="#4e88c7" stroke-width="1.2"/><line x1="3" y1="23.4" x2="15" y2="23.4" stroke="#4e88c7" stroke-width="1.2"/>
<path d="M28.3,6.5 V10 Q28.3,15.5 22,15.5 H19" fill="none" stroke="#4e88c7" stroke-width="3.2"/><polygon points="15.5,15.4 21.8,10 21.8,20.5" fill="#4e88c7"/></svg>
<div class="t" style="left:726.60px;top:123.52px;font-size:24.13px;color:#444444;transform:scaleX(0.9802);transform-origin:0 0;">Wrap Text</div>
<div class="a" style="left:593px;top:181px;width:1px;height:22px;background:#d9d9d9;"></div>
<svg class="a" style="left:600px;top:170px;" width="130" height="40" viewBox="0 0 130 40">
<g fill="#7f7f7f">
<rect x="10" y="10" width="9.8" height="1.2"/><rect x="22" y="10" width="11" height="1.2"/>
<rect x="22" y="14" width="7.8" height="1.2"/><rect x="22" y="17.9" width="7.8" height="1.2"/><rect x="22" y="21.9" width="11" height="1.2"/>
<rect x="10" y="25.9" width="9.8" height="1.2"/><rect x="22" y="25.9" width="11" height="1.2"/>
<rect x="48" y="10" width="9.8" height="1.2"/><rect x="60" y="10" width="11" height="1.2"/>
<rect x="60" y="14" width="7.8" height="1.2"/><rect x="60" y="17.9" width="7.8" height="1.2"/><rect x="60" y="21.9" width="11" height="1.2"/>
<rect x="48" y="25.9" width="9.8" height="1.2"/><rect x="60" y="25.9" width="11" height="1.2"/>
</g>
<polygon points="5.1,18.45 9.8,13 14,13 10.3,17 19.8,17 19.8,19.9 10.3,19.9 14,24 9.8,24" fill="#4e88c7"/>
<polygon points="57.9,18.45 53.2,13 49,13 52.7,17 43.2,17 43.2,19.9 52.7,19.9 49,24 53.2,24" fill="#4e88c7"/>
<g fill="none" stroke="#7f7f7f" stroke-width="1.2"><rect x="93.9" y="7.9" width="25.2" height="26.1"/><line x1="93.5" y1="13.4" x2="119.5" y2="13.4"/><line x1="93.5" y1="28.4" x2="119.5" y2="28.4"/><line x1="106.4" y1="8" x2="106.4" y2="13.4"/><line x1="106.4" y1="28.4" x2="106.4" y2="34"/></g>
<path d="M96,21.6 H117 M99.5,18 L96,21.6 L99.5,25.2 M113.5,18 L117,21.6 L113.5,25.2" fill="none" stroke="#4e88c7" stroke-width="1.2"/>
</svg>
<div class="t" style="left:726.60px;top:180.82px;font-size:24.13px;color:#444444;transform:scaleX(1.0179);transform-origin:0 0;">Merge & Center</div>
<svg class="a" style="left:910.3px;top:189px;" width="10.300000000000068" height="5.199999999999989" viewBox="0 0 10.300000000000068 5.199999999999989"><polygon points="0,0 10.300000000000068,0 5.150000000000034,5.199999999999989" fill="#777777"/></svg>
<div class="a" style="left:934px;top:113px;width:219px;height:40px;background:#fff;border:1px solid #ababab;box-sizing:border-box;"></div>
<div class="t" style="left:937.70px;top:122.99px;font-size:23.69px;color:#111;transform:scaleX(0.9485);transform-origin:0 0;">General</div>
<svg class="a" style="left:1138px;top:130px;" width="9" height="4.800000000000011" viewBox="0 0 9 4.800000000000011"><polygon points="0,0 9,0 4.5,4.800000000000011" fill="#777777"/></svg>
<svg class="a" style="left:939px;top:174px;" width="29" height="29" viewBox="0 0 29 29"><path d="M0,0 H28 V15.7 H0Z M3.5,2.5 Q3.5,5 1.5,5 V10.7 Q3.5,10.7 3.5,13.2 H24.5 Q24.5,10.7 26.5,10.7 V5 Q24.5,5 24.5,2.5Z" fill="#4e88c7" fill-rule="evenodd"/>
<circle cx="14" cy="7.3" r="3.6" fill="#4e88c7"/>
<g fill="#edc67e" stroke="#fff" stroke-width="0.9"><path d="M14,11.5 Q14,9 21,9 Q28,9 28,11.5 V19.5 Q28,22 21,22 Q14,22 14,19.5Z"/><path d="M14,14.2 Q21,17 28,14.2 M14,16.9 Q21,19.7 28,16.9" fill="none"/>
<path d="M5,20.5 Q5,18 12,18 Q19,18 19,20.5 V26 Q19,28.5 12,28.5 Q5,28.5 5,26Z"/><path d="M5,23.2 Q12,26 19,23.2" fill="none"/></g></svg>
<svg class="a" style="left:976px;top:185.8px;" width="9" height="5.199999999999989" viewBox="0 0 9 5.199999999999989"><polygon points="0,0 9,0 4.5,5.199999999999989" fill="#777777"/></svg>
<div class="t" style="left:995.00px;top:170.61px;font-size:34.88px;color:#666;transform:scaleX(0.8117);transform-origin:0 0;">%</div>
<svg class="a" style="left:1039px;top:178px;" width="13" height="18" viewBox="0 0 13 18"><path d="M6.5,1 A5.7,5.7 0 0 1 12.3,7 Q12.3,14 1,17.5 L0.8,16.3 Q5.5,14 6.5,11.8 A5.4,5.4 0 0 1 6.5,1Z" fill="#666"/></svg>
<div class="a" style="left:1070px;top:180.5px;width:1px;height:21px;background:#d9d9d9;"></div>
<svg class="a" style="left:1082px;top:175px;" width="14" height="11" viewBox="0 0 14 11"><path d="M6,0.8 L1.5,5.5 L6,10.2 M1.8,5.5 H13" fill="none" stroke="#4e88c7" stroke-width="2.8"/></svg>
<div class="t" style="left:1095.50px;top:172.51px;font-size:15.99px;color:#666;transform:scaleX(1.0112);transform-origin:0 0;">.0</div>
<div class="t" style="left:1086.00px;top:187.71px;font-size:15.99px;color:#666;transform:scaleX(1.0349);transform-origin:0 0;">.00</div>
<div class="t" style="left:1123.70px;top:172.51px;font-size:15.99px;color:#666;transform:scaleX(1.0574);transform-origin:0 0;">.00</div>
<svg class="a" style="left:1120px;top:190px;" width="14" height="11" viewBox="0 0 14 11"><path d="M7.5,0.8 L12,5.5 L7.5,10.2 M0.5,5.5 H11.5" fill="none" stroke="#4e88c7" stroke-width="2.8"/></svg>
<div class="t" style="left:1133.50px;top:187.71px;font-size:15.99px;color:#666;transform:scaleX(1.0112);transform-origin:0 0;">.0</div>
<svg class="a" style="left:1205px;top:106px;" width="58" height="57" viewBox="0 0 58 57"><rect x="0.6" y="0.6" width="51.3" height="46.3" fill="#fff"/>
<rect x="13.7" y="0.6" width="15" height="11" fill="#de6040"/><rect x="13.7" y="12" width="19" height="10.5" fill="#4e88c7"/><rect x="13.7" y="23.5" width="20" height="11" fill="#de6040"/><rect x="13.7" y="35" width="12" height="11.9" fill="#4e88c7"/>
<g stroke="#b4b4b4" stroke-width="1.1"><line x1="0" y1="11.9" x2="52" y2="11.9"/><line x1="0" y1="23" x2="52" y2="23"/><line x1="38.5" y1="0" x2="38.5" y2="47"/></g>
<line x1="13.7" y1="0" x2="13.7" y2="47" stroke="#a0a0a0" stroke-width="1"/><line x1="0" y1="34.5" x2="26" y2="34.5" stroke="#9a9a9a" stroke-width="1.1"/>
<rect x="0.6" y="0.6" width="51.3" height="46.3" fill="none" stroke="#7f7f7f" stroke-width="1.2"/>
<rect x="25.8" y="31.5" width="33" height="26" fill="#fff"/>
<rect x="27.6" y="33.3" width="30" height="23.3" fill="#fff" stroke="#7f7f7f" stroke-width="1.2"/>
<path d="M35.5,42.6 H49 M35.5,47.8 H49 M47,37.8 L38,52.2" fill="none" stroke="#444" stroke-width="1.7"/></svg>
<div class="t" style="left:1170.70px;top:170.40px;font-size:24.27px;color:#444444;transform:scaleX(0.9960);transform-origin:0 0;">Conditional</div>
<div class="t" style="left:1165.60px;top:202.50px;font-size:24.27px;color:#444444;transform:scaleX(0.9912);transform-origin:0 0;">Formatting</div>
<svg class="a" style="left:1289.2px;top:211px;" width="9.0" height="5" viewBox="0 0 9.0 5"><polygon points="0,0 9.0,0 4.5,5" fill="#777777"/></svg>
<svg class="a" style="left:1326px;top:105px;" width="62" height="59" viewBox="0 0 62 59"><defs><clipPath id="cf1"><polygon points="-1,-1 58,-1 58,14.8 20.4,52 -1,52"/></clipPath></defs>
<g clip-path="url(#cf1)"><rect x="14.3" y="10.3" width="42.1" height="40.3" fill="#c3d5ea"/>
<g stroke="#a6a6a6" stroke-width="1.1"><line x1="14.3" y1="0" x2="14.3" y2="51"/><line x1="28.4" y1="0" x2="28.4" y2="51"/><line x1="42.3" y1="0" x2="42.3" y2="51"/><line x1="0" y1="10.3" x2="57" y2="10.3"/><line x1="0" y1="20.3" x2="57" y2="20.3"/><line x1="0" y1="30.3" x2="57" y2="30.3"/><line x1="0" y1="40.4" x2="57" y2="40.4"/></g>
<rect x="0.6" y="0.6" width="55.8" height="50" fill="none" stroke="#7f7f7f" stroke-width="1.2"/></g>
<polygon points="45.96,28.96 60.54,12.78 60.77,28.5 52.1,35.8" fill="#7f7f7f"/>
<polygon points="38.9,37.4 44.1,31.5 50.1,37.2 44.1,42.9" fill="#7f7f7f"/>
<circle cx="35.2" cy="47.2" r="7.4" fill="#fff" stroke="#4e88c7" stroke-width="1.2"/>
<path d="M15.4,57.8 L25.9,46.5 Q30.5,43.6 35,45.8 Q39.8,48.5 40.6,54 Q39,57.8 33.5,57.8Z" fill="#4e88c7"/></svg>
<div class="t" style="left:1304.50px;top:170.40px;font-size:24.27px;color:#444444;transform:scaleX(0.9347);transform-origin:0 0;">Format as</div>
<div class="t" style="left:1320.00px;top:202.50px;font-size:24.27px;color:#444444;transform:scaleX(0.9136);transform-origin:0 0;">Table</div>
<svg class="a" style="left:1382px;top:211px;" width="9" height="5" viewBox="0 0 9 5"><polygon points="0,0 9,0 4.5,5" fill="#777777"/></svg>
<svg class="a" style="left:1327px;top:105px;" width="160" height="59" viewBox="0 0 160 59"><defs><clipPath id="cf2"><polygon points="95,-5 154,-5 154,14.8 116.8,52 95,52"/></clipPath></defs>
<g clip-path="url(#cf2)"><rect x="111.7" y="10.5" width="24.8" height="22.2" fill="#c3d5ea"/>
<g stroke="#a6a6a6" stroke-width="1.1"><line x1="111.7" y1="-3" x2="111.7" y2="46"/><line x1="136.5" y1="-3" x2="136.5" y2="46"/><line x1="96.9" y1="10.5" x2="152" y2="10.5"/><line x1="96.9" y1="32.7" x2="152" y2="32.7"/></g>
<rect x="96.9" y="-1.7" width="55.3" height="47.2" fill="none" stroke="#7f7f7f" stroke-width="1.2"/></g>
<g transform="translate(95.4,0)"><polygon points="46,29 60.5,12.8 60.8,28.5 52.1,35.8" fill="#7f7f7f"/>
<polygon points="38.9,37.4 44.1,31.5 50.1,37.2 44.1,42.9" fill="#7f7f7f"/>
<circle cx="35.2" cy="47.2" r="7.4" fill="#fff" stroke="#4e88c7" stroke-width="1.2"/>
<path d="M15.4,57.8 L25.9,46.5 Q30.5,43.6 35,45.8 Q39.8,48.5 40.6,54 Q39,57.8 33.5,57.8Z" fill="#4e88c7"/></g></svg>
<div class="t" style="left:1431.50px;top:170.40px;font-size:24.27px;color:#444444;transform:scaleX(0.9075);transform-origin:0 0;">Cell</div>
<div class="t" style="left:1412.70px;top:202.50px;font-size:24.27px;color:#444444;transform:scaleX(0.9041);transform-origin:0 0;">Styles</div>
<svg class="a" style="left:1481px;top:211px;" width="9" height="5" viewBox="0 0 9 5"><polygon points="0,0 9,0 4.5,5" fill="#777777"/></svg>
<svg class="a" style="left:1509px;top:103px;" width="56" height="57" viewBox="0 0 56 57"><g fill="none" stroke="#7f7f7f" stroke-width="1.2"><rect x="4.6" y="0.6" width="30" height="11"/><line x1="19.6" y1="0" x2="19.6" y2="12"/>
<rect x="4.6" y="33.6" width="30" height="22"/><line x1="19.6" y1="33" x2="19.6" y2="56"/><line x1="4" y1="44.6" x2="35" y2="44.6"/></g>
<rect x="26.6" y="16.6" width="28.5" height="12" fill="#c3d5ea" stroke="#7f7f7f" stroke-width="1.2"/><line x1="40.8" y1="16" x2="40.8" y2="29" stroke="#7f7f7f" stroke-width="1.2"/>
<path d="M8,16 L2,22.5 L8,29 M2,22.5 H20" fill="none" stroke="#4e88c7" stroke-width="3"/></svg>
<div class="t" style="left:1510.30px;top:170.50px;font-size:24.27px;color:#444444;transform:scaleX(0.9508);transform-origin:0 0;">Insert</div>
<svg class="a" style="left:1535.3px;top:211px;" width="8.5" height="5" viewBox="0 0 8.5 5"><polygon points="0,0 8.5,0 4.25,5" fill="#777777"/></svg>
<svg class="a" style="left:1585px;top:103px;" width="60" height="57" viewBox="0 0 60 57"><g fill="none" stroke="#7f7f7f" stroke-width="1.2"><rect x="0.6" y="0.6" width="30" height="11"/><line x1="15.6" y1="0" x2="15.6" y2="12"/>
<rect x="0.6" y="33.6" width="30" height="22"/><line x1="15.6" y1="33" x2="15.6" y2="56"/><line x1="0" y1="44.6" x2="31" y2="44.6"/></g>
<rect x="11.6" y="16.6" width="25" height="12" fill="#c3d5ea" stroke="#7f7f7f" stroke-width="1.2"/>
<polygon points="36,16 44,22.5 36,29" fill="#c3d5ea"/>
<path d="M30.5,13 Q37,16 45,24 Q51,31 59,38 M30,38 Q37,31 45,22 Q51,15 58,10" fill="none" stroke="#fff" stroke-width="6" stroke-linecap="round"/>
<path d="M30.5,13 Q37,16 45,24 Q51,31 59,38" fill="none" stroke="#de6040" stroke-width="3.4" stroke-linecap="round"/><path d="M30,38 Q37,31 45,22 Q51,15 58.5,10.5" fill="none" stroke="#de6040" stroke-width="3.2" stroke-linecap="round"/></svg>
<div class="t" style="left:1579.80px;top:170.50px;font-size:24.27px;color:#444444;transform:scaleX(0.9580);transform-origin:0 0;">Delete</div>
<svg class="a" style="left:1609px;top:211px;" width="9" height="5" viewBox="0 0 9 5"><polygon points="0,0 9,0 4.5,5" fill="#777777"/></svg>
<svg class="a" style="left:1664px;top:102px;" width="54" height="57" viewBox="0 0 54 57"><path d="M0.6,0 V9 M44,0 V9" stroke="#4e88c7" stroke-width="1.2"/><path d="M6,4.8 H38 M10,1 L5,4.8 L10,8.5 M34,1 L39,4.8 L34,8.5" fill="none" stroke="#4e88c7" stroke-width="2"/>
<g fill="none" stroke="#8a8a8a" stroke-width="1.1"><rect x="0.6" y="11.6" width="52.4" height="38"/><line x1="14.5" y1="11" x2="14.5" y2="50"/><line x1="29.5" y1="11" x2="29.5" y2="50"/><line x1="43.5" y1="11" x2="43.5" y2="50"/><line x1="0" y1="21" x2="53" y2="21"/><line x1="0" y1="39.6" x2="53" y2="39.6"/>
<path d="M0.6,49.6 V54 Q0.6,56.5 3,56.5 H16 L22,50 V54 Q22,56.5 25,56.5 H37 L43,50"/></g>
<rect x="15" y="21.5" width="14" height="18" fill="#4e88c7"/></svg>
<div class="t" style="left:1654.30px;top:170.50px;font-size:24.27px;color:#444444;transform:scaleX(0.9593);transform-origin:0 0;">Format</div>
<svg class="a" style="left:1687px;top:211px;" width="9.200000000000045" height="5" viewBox="0 0 9.200000000000045 5"><polygon points="0,0 9.200000000000045,0 4.600000000000023,5" fill="#777777"/></svg>
<div class="t" style="left:1747.40px;top:95.78px;font-size:38.23px;color:#555;">Σ</div>
<svg class="a" style="left:1782px;top:113.3px;" width="9" height="4.700000000000003" viewBox="0 0 9 4.700000000000003"><polygon points="0,0 9,0 4.5,4.700000000000003" fill="#777777"/></svg>
<svg class="a" style="left:1745px;top:140px;" width="29" height="28" viewBox="0 0 29 28"><rect x="0.6" y="0.6" width="27" height="27" fill="#fff" stroke="#7f7f7f" stroke-width="1.2"/><rect x="0" y="0" width="28.2" height="5" fill="#7f7f7f"/>
<path d="M14,8 V21 M7.5,15 L14,21.5 L20.5,15" fill="none" stroke="#4e88c7" stroke-width="2.6"/></svg>
<svg class="a" style="left:1780px;top:152px;" width="9" height="4.800000000000011" viewBox="0 0 9 4.800000000000011"><polygon points="0,0 9,0 4.5,4.800000000000011" fill="#777777"/></svg>
<svg class="a" style="left:1747px;top:181px;" width="29" height="23" viewBox="0 0 29 23"><polygon points="16,1 21,6 10,17 5,12" fill="#e8899b"/><path d="M21.5,0.5 Q23.5,2 21.5,4 L11,15 L6,10 L16.5,0 Q19,-1.5 21.5,0.5Z" fill="#e8899b"/>
<polygon points="5,12 10,17 7,20 2,15" fill="#e8899b"/><line x1="4" y1="13.5" x2="9" y2="18.5" stroke="#fff" stroke-width="1.3"/><line x1="8" y1="22.5" x2="28" y2="22.5" stroke="#7f7f7f" stroke-width="1"/></svg>
<svg class="a" style="left:1780px;top:191px;" width="9" height="5" viewBox="0 0 9 5"><polygon points="0,0 9,0 4.5,5" fill="#777777"/></svg>
<div class="t" style="left:1805.30px;top:101.82px;font-size:29.80px;color:#4e88c7;font-weight:bold;transform:scaleX(0.9043);transform-origin:0 0;">A</div>
<div class="t" style="left:1806.00px;top:129.08px;font-size:31.98px;color:#9d5fbf;font-weight:bold;transform:scaleX(0.9228);transform-origin:0 0;">Z</div>
<svg class="a" style="left:1829px;top:119px;" width="33" height="32" viewBox="0 0 33 32"><polygon points="0.5,0.5 32,0.5 32,3 21,16 21,31.5 12,31.5 12,16 0.5,3" fill="#7f7f7f"/><rect x="14" y="16" width="5" height="14" fill="#fff"/><polygon points="3,2.5 29,2.5 19,14.5 14,14.5" fill="#7f7f7f"/></svg>
<svg class="a" style="left:1888px;top:108px;" width="52" height="47" viewBox="0 0 52 47"><g fill="#7f7f7f"><rect x="11.5" y="0" width="8" height="6"/><rect x="31.5" y="0" width="8" height="6"/>
<rect x="8" y="6" width="15" height="10"/><rect x="28" y="6" width="15" height="10"/>
<rect x="4" y="16" width="19" height="14"/><rect x="28" y="16" width="19" height="14"/>
<rect x="0" y="30" width="23" height="16.5"/><rect x="28" y="30" width="23" height="16.5"/>
<rect x="23" y="19" width="5" height="4"/><rect x="23" y="28" width="5" height="4"/></g>
<g fill="#fff"><rect x="13" y="1.5" width="1.3" height="4.5"/><rect x="37" y="1.5" width="1.3" height="4.5"/><rect x="9.5" y="7" width="1.3" height="9"/><rect x="40.3" y="7" width="1.3" height="9"/><rect x="5.5" y="17" width="1.3" height="13"/><rect x="44.3" y="17" width="1.3" height="13"/><rect x="1.5" y="31" width="1.3" height="14"/><rect x="48.3" y="31" width="1.3" height="14"/><rect x="23" y="15" width="5" height="2"/></g></svg>
<div class="t" style="left:1799.60px;top:170.44px;font-size:23.98px;color:#444444;transform:scaleX(1.0244);transform-origin:0 0;">Sort &</div>
<div class="t" style="left:1879.40px;top:170.44px;font-size:23.98px;color:#444444;transform:scaleX(1.0143);transform-origin:0 0;">Find &</div>
<div class="t" style="left:1799.60px;top:202.54px;font-size:23.98px;color:#444444;transform:scaleX(0.9729);transform-origin:0 0;">Filter</div>
<svg class="a" style="left:1859.2px;top:210.7px;" width="8.799999999999955" height="5.100000000000023" viewBox="0 0 8.799999999999955 5.100000000000023"><polygon points="0,0 8.799999999999955,0 4.399999999999977,5.100000000000023" fill="#777777"/></svg>
<div class="t" style="left:1873.60px;top:202.54px;font-size:23.98px;color:#444444;transform:scaleX(0.9554);transform-origin:0 0;">Select</div>
<svg class="a" style="left:1945px;top:210.7px;" width="9" height="5.100000000000023" viewBox="0 0 9 5.100000000000023"><polygon points="0,0 9,0 4.5,5.100000000000023" fill="#777777"/></svg>
<svg class="a" style="left:29px;top:333px;" width="30" height="30" viewBox="0 0 30 30"><polygon points="0,30 30,30 30,0" fill="#dadada"/></svg>
<div class="a" style="left:62px;top:329px;width:553px;height:37px;background:#e1e1e1;"></div>
<div class="a" style="left:1217px;top:329px;width:1px;height:37px;background:#d8d8d8;"></div>
<div class="a" style="left:1460px;top:329px;width:1px;height:37px;background:#d8d8d8;"></div>
<div class="a" style="left:1703px;top:329px;width:1px;height:37px;background:#d8d8d8;"></div>
<div class="a" style="left:1987px;top:329px;width:1px;height:37px;background:#d8d8d8;"></div>
<div class="a" style="left:2009px;top:329px;width:1px;height:37px;background:#d8d8d8;"></div>
<div class="a" style="left:615px;top:329px;width:1px;height:37px;background:#ababab;"></div>
<div class="a" style="left:1px;top:366px;width:2008px;height:1px;background:#ababab;"></div>
<div class="a" style="left:62px;top:364px;width:553px;height:3px;background:#217346;"></div>
<div class="a" style="left:1px;top:398px;width:61px;height:30px;background:#e1e1e1;"></div>
<div class="a" style="left:1px;top:428px;width:2008px;height:1px;background:#d4d4d4;"></div>
<div class="a" style="left:1px;top:459px;width:2008px;height:1px;background:#d4d4d4;"></div>
<div class="a" style="left:1px;top:490px;width:2008px;height:1px;background:#d4d4d4;"></div>
<div class="a" style="left:1px;top:521px;width:2008px;height:1px;background:#d4d4d4;"></div>
<div class="a" style="left:1px;top:552px;width:2008px;height:1px;background:#d4d4d4;"></div>
<div class="a" style="left:1px;top:583px;width:2008px;height:1px;background:#d4d4d4;"></div>
<div class="a" style="left:1px;top:614px;width:2008px;height:1px;background:#d4d4d4;"></div>
<div class="a" style="left:1px;top:645px;width:2008px;height:1px;background:#d4d4d4;"></div>
<div class="a" style="left:1px;top:676px;width:2008px;height:1px;background:#d4d4d4;"></div>
<div class="a" style="left:1px;top:707px;width:2008px;height:1px;background:#d4d4d4;"></div>
<div class="a" style="left:1px;top:738px;width:2008px;height:1px;background:#d4d4d4;"></div>
<div class="a" style="left:1px;top:769px;width:2008px;height:1px;background:#d4d4d4;"></div>
<div class="a" style="left:1px;top:800px;width:2008px;height:1px;background:#d4d4d4;"></div>
<div class="a" style="left:1px;top:831px;width:2008px;height:1px;background:#d4d4d4;"></div>
<div class="a" style="left:1px;top:862px;width:2008px;height:1px;background:#d4d4d4;"></div>
<div class="a" style="left:1px;top:893px;width:2008px;height:1px;background:#d4d4d4;"></div>
<div class="a" style="left:1px;top:924px;width:2008px;height:1px;background:#d4d4d4;"></div>
<div class="a" style="left:1px;top:955px;width:2008px;height:1px;background:#d4d4d4;"></div>
<div class="a" style="left:1px;top:986px;width:2008px;height:1px;background:#d4d4d4;"></div>
<div class="a" style="left:1px;top:1017px;width:2008px;height:1px;background:#d4d4d4;"></div>
<div class="a" style="left:1px;top:1048px;width:2008px;height:1px;background:#d4d4d4;"></div>
<div class="a" style="left:1px;top:1079px;width:2008px;height:1px;background:#d4d4d4;"></div>
<div class="a" style="left:1px;top:1110px;width:2008px;height:1px;background:#d4d4d4;"></div>
<div class="a" style="left:1px;top:1141px;width:2008px;height:1px;background:#d4d4d4;"></div>
<div class="a" style="left:1px;top:1172px;width:2008px;height:1px;background:#d4d4d4;"></div>
<div class="a" style="left:1px;top:1203px;width:2008px;height:1px;background:#d4d4d4;"></div>
<div class="a" style="left:1px;top:1234px;width:2008px;height:1px;background:#d4d4d4;"></div>
<div class="a" style="left:1px;top:1265px;width:2008px;height:1px;background:#d4d4d4;"></div>
<div class="a" style="left:1px;top:1296px;width:2008px;height:1px;background:#d4d4d4;"></div>
<div class="a" style="left:1px;top:1327px;width:2008px;height:1px;background:#d4d4d4;"></div>
<div class="a" style="left:1px;top:1358px;width:2008px;height:1px;background:#d4d4d4;"></div>
<div class="a" style="left:1px;top:1389px;width:2008px;height:1px;background:#d4d4d4;"></div>
<div class="a" style="left:1px;top:1420px;width:2008px;height:1px;background:#d4d4d4;"></div>
<div class="a" style="left:615px;top:367px;width:1px;height:1082px;background:#d4d4d4;"></div>
<div class="a" style="left:975px;top:367px;width:1px;height:1082px;background:#d4d4d4;"></div>
<div class="a" style="left:1217px;top:367px;width:1px;height:1082px;background:#d4d4d4;"></div>
<div class="a" style="left:1460px;top:367px;width:1px;height:1082px;background:#d4d4d4;"></div>
<div class="a" style="left:1703px;top:367px;width:1px;height:1082px;background:#d4d4d4;"></div>
<div class="a" style="left:1987px;top:367px;width:1px;height:1082px;background:#d4d4d4;"></div>
<div class="a" style="left:2009px;top:367px;width:1px;height:1082px;background:#d4d4d4;"></div>
<div class="a" style="left:62px;top:329px;width:1px;height:1120px;background:#c8c8c8;"></div>
<div class="a" style="left:2008px;top:329px;width:1px;height:1120px;background:#ababab;"></div>
<div class="a" style="left:1px;top:1448px;width:2008px;height:1px;background:#ababab;"></div>
<div class="a" style="left:62px;top:367px;width:1926px;height:30px;background:#0070c0;"></div>
<div class="t" style="left:66.50px;top:373.42px;font-size:21.58px;color:#fff;font-weight:bold;transform:scaleX(0.9150);transform-origin:0 0;">Section</div>
<div class="t" style="left:617.80px;top:373.42px;font-size:21.58px;color:#fff;font-weight:bold;transform:scaleX(0.9676);transform-origin:0 0;">Type</div>
<div class="t" style="left:1122.60px;top:373.72px;font-size:21.58px;color:#fff;font-weight:bold;transform:scaleX(0.9365);transform-origin:0 0;">Jan 2019</div>
<div class="t" style="left:1363.40px;top:373.72px;font-size:21.58px;color:#fff;font-weight:bold;transform:scaleX(0.9547);transform-origin:0 0;">Feb 2019</div>
<div class="t" style="left:1600.60px;top:373.72px;font-size:21.58px;color:#fff;font-weight:bold;transform:scaleX(1.0175);transform-origin:0 0;">Mar 2019</div>
<div class="t" style="left:1928.70px;top:373.72px;font-size:21.58px;color:#fff;font-weight:bold;transform:scaleX(0.9966);transform-origin:0 0;">Total</div>
<div class="t" style="left:66.50px;top:404.12px;font-size:21.58px;color:#000;">Taxable Sales (excluding zero rated)</div>
<div class="t" style="left:617.80px;top:404.12px;font-size:21.58px;color:#000;transform:scaleX(0.9627);transform-origin:0 0;">Taxable Value - GSTR-3B</div>
<div class="t" style="left:1036.22px;top:404.97px;font-size:21.30px;color:#000;">1,32,57,80,175.00</div>
<div class="t" style="left:1279.82px;top:404.97px;font-size:21.30px;color:#000;">1,18,60,30,473.00</div>
<div class="t" style="left:1522.82px;top:404.97px;font-size:21.30px;color:#000;">1,24,27,12,258.00</div>
<div class="t" style="left:1794.89px;top:404.97px;font-size:21.30px;color:#000;">14,88,71,70,987.00</div>
<div class="t" style="left:66.50px;top:435.12px;font-size:21.58px;color:#000;">Taxable Sales (excluding zero rated)</div>
<div class="t" style="left:617.80px;top:435.12px;font-size:21.58px;color:#000;transform:scaleX(0.9640);transform-origin:0 0;">Taxable Value - GSTR-1</div>
<div class="t" style="left:1036.22px;top:435.97px;font-size:21.30px;color:#000;">1,32,57,80,175.72</div>
<div class="t" style="left:1279.82px;top:435.97px;font-size:21.30px;color:#000;">1,18,60,30,473.10</div>
<div class="t" style="left:1522.82px;top:435.97px;font-size:21.30px;color:#000;">1,17,09,20,444.45</div>
<div class="t" style="left:1794.89px;top:435.97px;font-size:21.30px;color:#000;">14,91,04,38,467.60</div>
<div class="t" style="left:66.50px;top:466.12px;font-size:21.58px;color:#000;transform:scaleX(0.9943);transform-origin:0 0;">Taxable Sales (excluding zero rated) (2017-18)</div>
<div class="t" style="left:617.80px;top:466.12px;font-size:21.58px;color:#000;transform:scaleX(0.9640);transform-origin:0 0;">Taxable Value - GSTR-1</div>
<div class="t" style="left:1570.21px;top:466.97px;font-size:21.30px;color:#000;">17,82,937.68</div>
<div class="t" style="left:1854.11px;top:466.97px;font-size:21.30px;color:#000;">17,82,937.68</div>
<div class="a" style="left:62px;top:490px;width:1926px;height:32px;background:#bdd7ee;"></div>
<div class="t" style="left:66.50px;top:497.42px;font-size:21.58px;color:#000;font-weight:bold;transform:scaleX(0.9557);transform-origin:0 0;">Taxable Sales (excluding zero rated)</div>
<div class="t" style="left:617.80px;top:497.42px;font-size:21.58px;color:#000;font-weight:bold;transform:scaleX(0.9800);transform-origin:0 0;">Taxable Value - Difference</div>
<div class="t" style="left:1159.21px;top:497.88px;font-size:21.40px;color:#000;font-weight:bold;">-0.72</div>
<div class="t" style="left:1402.81px;top:497.88px;font-size:21.40px;color:#000;font-weight:bold;">-0.10</div>
<div class="t" style="left:1551.75px;top:497.88px;font-size:21.40px;color:#000;font-weight:bold;">7,00,08,875.87</div>
<div class="t" style="left:1828.59px;top:497.88px;font-size:21.40px;color:#000;font-weight:bold;">-2,50,50,418.28</div>
<div class="t" style="left:66.50px;top:528.12px;font-size:21.58px;color:#000;">Taxable Sales (excluding zero rated)</div>
<div class="t" style="left:617.80px;top:528.12px;font-size:21.58px;color:#000;transform:scaleX(0.9647);transform-origin:0 0;">Integrated Tax - GSTR-3B</div>
<div class="t" style="left:1065.82px;top:528.97px;font-size:21.30px;color:#000;">7,96,62,565.00</div>
<div class="t" style="left:1309.42px;top:528.97px;font-size:21.30px;color:#000;">6,29,91,801.00</div>
<div class="t" style="left:1552.42px;top:528.97px;font-size:21.30px;color:#000;">8,13,62,968.00</div>
<div class="t" style="left:1824.50px;top:528.97px;font-size:21.30px;color:#000;">94,98,49,425.00</div>
<div class="t" style="left:66.50px;top:559.12px;font-size:21.58px;color:#000;">Taxable Sales (excluding zero rated)</div>
<div class="t" style="left:617.80px;top:559.12px;font-size:21.58px;color:#000;transform:scaleX(0.9649);transform-origin:0 0;">Integrated Tax - GSTR-1</div>
<div class="t" style="left:1065.82px;top:559.97px;font-size:21.30px;color:#000;">7,96,62,563.43</div>
<div class="t" style="left:1309.42px;top:559.97px;font-size:21.30px;color:#000;">6,29,91,799.37</div>
<div class="t" style="left:1552.42px;top:559.97px;font-size:21.30px;color:#000;">7,63,38,330.79</div>
<div class="t" style="left:1824.50px;top:559.97px;font-size:21.30px;color:#000;">94,38,82,686.55</div>
<div class="t" style="left:66.50px;top:590.12px;font-size:21.58px;color:#000;transform:scaleX(0.9943);transform-origin:0 0;">Taxable Sales (excluding zero rated) (2017-18)</div>
<div class="t" style="left:617.80px;top:590.12px;font-size:21.58px;color:#000;transform:scaleX(0.9649);transform-origin:0 0;">Integrated Tax - GSTR-1</div>
<div class="t" style="left:1582.03px;top:590.97px;font-size:21.30px;color:#000;">3,20,928.78</div>
<div class="t" style="left:1865.93px;top:590.97px;font-size:21.30px;color:#000;">3,20,928.78</div>
<div class="a" style="left:62px;top:614px;width:1926px;height:32px;background:#bdd7ee;"></div>
<div class="t" style="left:66.50px;top:621.42px;font-size:21.58px;color:#000;font-weight:bold;transform:scaleX(0.9557);transform-origin:0 0;">Taxable Sales (excluding zero rated)</div>
<div class="t" style="left:617.80px;top:621.42px;font-size:21.58px;color:#000;font-weight:bold;transform:scaleX(0.9765);transform-origin:0 0;">Integrated Tax - Difference</div>
<div class="t" style="left:1166.38px;top:621.88px;font-size:21.40px;color:#000;font-weight:bold;">1.57</div>
<div class="t" style="left:1409.98px;top:621.88px;font-size:21.40px;color:#000;font-weight:bold;">1.63</div>
<div class="t" style="left:1569.62px;top:621.88px;font-size:21.40px;color:#000;font-weight:bold;">47,03,708.43</div>
<div class="t" style="left:1853.52px;top:621.88px;font-size:21.40px;color:#000;font-weight:bold;">56,45,809.67</div>
<div class="t" style="left:66.50px;top:652.12px;font-size:21.58px;color:#000;">Taxable Sales (excluding zero rated)</div>
<div class="t" style="left:617.80px;top:652.12px;font-size:21.58px;color:#000;transform:scaleX(0.9433);transform-origin:0 0;">Central Tax - GSTR-3B</div>
<div class="t" style="left:1065.82px;top:652.97px;font-size:21.30px;color:#000;">5,50,75,074.00</div>
<div class="t" style="left:1309.42px;top:652.97px;font-size:21.30px;color:#000;">4,65,35,463.00</div>
<div class="t" style="left:1552.42px;top:652.97px;font-size:21.30px;color:#000;">5,04,15,671.00</div>
<div class="t" style="left:1824.50px;top:652.97px;font-size:21.30px;color:#000;">59,47,93,240.00</div>
<div class="t" style="left:66.50px;top:683.12px;font-size:21.58px;color:#000;">Taxable Sales (excluding zero rated)</div>
<div class="t" style="left:617.80px;top:683.12px;font-size:21.58px;color:#000;transform:scaleX(0.9454);transform-origin:0 0;">Central Tax - GSTR-1</div>
<div class="t" style="left:1065.82px;top:683.97px;font-size:21.30px;color:#000;">5,51,25,346.00</div>
<div class="t" style="left:1309.42px;top:683.97px;font-size:21.30px;color:#000;">4,65,35,462.18</div>
<div class="t" style="left:1552.42px;top:683.97px;font-size:21.30px;color:#000;">4,65,13,080.26</div>
<div class="t" style="left:1824.50px;top:683.97px;font-size:21.30px;color:#000;">59,00,45,479.51</div>
<div class="a" style="left:62px;top:707px;width:1926px;height:32px;background:#bdd7ee;"></div>
<div class="t" style="left:66.50px;top:714.42px;font-size:21.58px;color:#000;font-weight:bold;transform:scaleX(0.9557);transform-origin:0 0;">Taxable Sales (excluding zero rated)</div>
<div class="t" style="left:617.80px;top:714.42px;font-size:21.58px;color:#000;font-weight:bold;transform:scaleX(0.9682);transform-origin:0 0;">Central Tax - Difference</div>
<div class="t" style="left:1105.71px;top:714.88px;font-size:21.40px;color:#000;font-weight:bold;">-50,272.00</div>
<div class="t" style="left:1409.98px;top:714.88px;font-size:21.40px;color:#000;font-weight:bold;">0.82</div>
<div class="t" style="left:1569.62px;top:714.88px;font-size:21.40px;color:#000;font-weight:bold;">39,02,590.74</div>
<div class="t" style="left:1853.52px;top:714.88px;font-size:21.40px;color:#000;font-weight:bold;">47,47,760.49</div>
<div class="t" style="left:66.50px;top:745.12px;font-size:21.58px;color:#000;">Taxable Sales (excluding zero rated)</div>
<div class="t" style="left:617.80px;top:745.12px;font-size:21.58px;color:#000;transform:scaleX(0.9465);transform-origin:0 0;">State/UT Tax - GSTR-3B</div>
<div class="t" style="left:1065.82px;top:745.97px;font-size:21.30px;color:#000;">5,50,75,074.00</div>
<div class="t" style="left:1309.42px;top:745.97px;font-size:21.30px;color:#000;">4,65,35,463.00</div>
<div class="t" style="left:1552.42px;top:745.97px;font-size:21.30px;color:#000;">5,04,15,671.00</div>
<div class="t" style="left:1824.50px;top:745.97px;font-size:21.30px;color:#000;">59,47,93,240.00</div>
<div class="t" style="left:66.50px;top:776.12px;font-size:21.58px;color:#000;">Taxable Sales (excluding zero rated)</div>
<div class="t" style="left:617.80px;top:776.12px;font-size:21.58px;color:#000;transform:scaleX(0.9464);transform-origin:0 0;">State/UT Tax - GSTR-1</div>
<div class="t" style="left:1065.82px;top:776.97px;font-size:21.30px;color:#000;">5,51,25,346.00</div>
<div class="t" style="left:1309.42px;top:776.97px;font-size:21.30px;color:#000;">4,65,35,462.18</div>
<div class="t" style="left:1552.42px;top:776.97px;font-size:21.30px;color:#000;">4,65,13,080.26</div>
<div class="t" style="left:1824.50px;top:776.97px;font-size:21.30px;color:#000;">59,00,45,479.51</div>
<div class="a" style="left:62px;top:800px;width:1926px;height:32px;background:#bdd7ee;"></div>
<div class="t" style="left:66.50px;top:807.42px;font-size:21.58px;color:#000;font-weight:bold;transform:scaleX(0.9557);transform-origin:0 0;">Taxable Sales (excluding zero rated)</div>
<div class="t" style="left:617.80px;top:807.42px;font-size:21.58px;color:#000;font-weight:bold;transform:scaleX(0.9845);transform-origin:0 0;">State/UT Tax - Difference</div>
<div class="t" style="left:1105.71px;top:807.88px;font-size:21.40px;color:#000;font-weight:bold;">-50,272.00</div>
<div class="t" style="left:1409.98px;top:807.88px;font-size:21.40px;color:#000;font-weight:bold;">0.82</div>
<div class="t" style="left:1569.62px;top:807.88px;font-size:21.40px;color:#000;font-weight:bold;">39,02,590.74</div>
<div class="t" style="left:1853.52px;top:807.88px;font-size:21.40px;color:#000;font-weight:bold;">47,47,760.49</div>
<div class="t" style="left:66.50px;top:838.12px;font-size:21.58px;color:#000;">Taxable Sales (excluding zero rated)</div>
<div class="t" style="left:617.80px;top:838.12px;font-size:21.58px;color:#000;transform:scaleX(0.8772);transform-origin:0 0;">Cess - GSTR-3B</div>
<div class="t" style="left:1083.61px;top:838.97px;font-size:21.30px;color:#000;">14,89,868.00</div>
<div class="t" style="left:1327.21px;top:838.97px;font-size:21.30px;color:#000;">33,06,752.00</div>
<div class="t" style="left:1582.03px;top:838.97px;font-size:21.30px;color:#000;">6,24,308.00</div>
<div class="t" style="left:1836.32px;top:838.97px;font-size:21.30px;color:#000;">2,02,30,176.00</div>
<div class="t" style="left:66.50px;top:869.12px;font-size:21.58px;color:#000;">Taxable Sales (excluding zero rated)</div>
<div class="t" style="left:617.80px;top:869.12px;font-size:21.58px;color:#000;transform:scaleX(0.8697);transform-origin:0 0;">Cess - GSTR-1</div>
<div class="t" style="left:1083.61px;top:869.97px;font-size:21.30px;color:#000;">14,89,868.00</div>
<div class="t" style="left:1327.21px;top:869.97px;font-size:21.30px;color:#000;">33,06,752.00</div>
<div class="t" style="left:1582.03px;top:869.97px;font-size:21.30px;color:#000;">6,24,308.00</div>
<div class="t" style="left:1836.32px;top:869.97px;font-size:21.30px;color:#000;">2,02,30,176.00</div>
<div class="t" style="left:66.50px;top:900.12px;font-size:21.58px;color:#000;transform:scaleX(0.9943);transform-origin:0 0;">Taxable Sales (excluding zero rated) (2017-18)</div>
<div class="t" style="left:617.80px;top:900.12px;font-size:21.58px;color:#000;transform:scaleX(0.8697);transform-origin:0 0;">Cess - GSTR-1</div>
<div class="t" style="left:1865.93px;top:900.97px;font-size:21.30px;color:#000;">8,00,000.00</div>
<div class="a" style="left:62px;top:924px;width:1926px;height:32px;background:#bdd7ee;"></div>
<div class="t" style="left:66.50px;top:931.42px;font-size:21.58px;color:#000;font-weight:bold;transform:scaleX(0.9557);transform-origin:0 0;">Taxable Sales (excluding zero rated)</div>
<div class="t" style="left:617.80px;top:931.42px;font-size:21.58px;color:#000;font-weight:bold;transform:scaleX(0.9413);transform-origin:0 0;">Cess - Difference</div>
<div class="t" style="left:1177.42px;top:931.88px;font-size:21.40px;color:#000;font-weight:bold;">-</div>
<div class="t" style="left:1421.02px;top:931.88px;font-size:21.40px;color:#000;font-weight:bold;">-</div>
<div class="t" style="left:1664.02px;top:931.88px;font-size:21.40px;color:#000;font-weight:bold;">-</div>
<div class="t" style="left:1858.34px;top:931.88px;font-size:21.40px;color:#000;font-weight:bold;">-8,00,000.00</div>
<div class="t" style="left:66.50px;top:962.12px;font-size:21.58px;color:#000;transform:scaleX(0.9901);transform-origin:0 0;">Taxable Sales (zero rated)</div>
<div class="t" style="left:617.80px;top:962.12px;font-size:21.58px;color:#000;transform:scaleX(0.9627);transform-origin:0 0;">Taxable Value - GSTR-3B</div>
<div class="t" style="left:1065.82px;top:962.97px;font-size:21.30px;color:#000;">1,55,77,366.00</div>
<div class="t" style="left:1309.42px;top:962.97px;font-size:21.30px;color:#000;">1,12,96,736.00</div>
<div class="t" style="left:1552.42px;top:962.97px;font-size:21.30px;color:#000;">5,41,02,673.00</div>
<div class="t" style="left:1824.50px;top:962.97px;font-size:21.30px;color:#000;">70,61,89,639.00</div>
<div class="t" style="left:66.50px;top:993.12px;font-size:21.58px;color:#000;transform:scaleX(0.9901);transform-origin:0 0;">Taxable Sales (zero rated)</div>
<div class="t" style="left:617.80px;top:993.12px;font-size:21.58px;color:#000;transform:scaleX(0.9640);transform-origin:0 0;">Taxable Value - GSTR-1</div>
<div class="t" style="left:1065.82px;top:993.97px;font-size:21.30px;color:#000;">1,55,77,366.00</div>
<div class="t" style="left:1309.42px;top:993.97px;font-size:21.30px;color:#000;">1,12,96,735.48</div>
<div class="t" style="left:1552.42px;top:993.97px;font-size:21.30px;color:#000;">5,41,02,672.00</div>
<div class="t" style="left:1824.50px;top:993.97px;font-size:21.30px;color:#000;">70,39,31,015.47</div>
<div class="a" style="left:62px;top:1017px;width:1926px;height:32px;background:#bdd7ee;"></div>
<div class="t" style="left:66.50px;top:1024.42px;font-size:21.58px;color:#000;font-weight:bold;transform:scaleX(0.9632);transform-origin:0 0;">Taxable Sales (zero rated)</div>
<div class="t" style="left:617.80px;top:1024.42px;font-size:21.58px;color:#000;font-weight:bold;transform:scaleX(0.9800);transform-origin:0 0;">Taxable Value - Difference</div>
<div class="t" style="left:1177.42px;top:1024.88px;font-size:21.40px;color:#000;font-weight:bold;">-</div>
<div class="t" style="left:1409.98px;top:1024.88px;font-size:21.40px;color:#000;font-weight:bold;">0.52</div>
<div class="t" style="left:1652.98px;top:1024.88px;font-size:21.40px;color:#000;font-weight:bold;">1.00</div>
<div class="t" style="left:1853.52px;top:1024.88px;font-size:21.40px;color:#000;font-weight:bold;">22,58,623.53</div>
<div class="t" style="left:66.50px;top:1055.12px;font-size:21.58px;color:#000;transform:scaleX(0.9915);transform-origin:0 0;">Nil-Rated and Exempt Sales</div>
<div class="t" style="left:617.80px;top:1055.12px;font-size:21.58px;color:#000;transform:scaleX(0.9568);transform-origin:0 0;">Supply Value - GSTR-3B</div>
<div class="t" style="left:1095.43px;top:1055.97px;font-size:21.30px;color:#000;">1,59,000.00</div>
<div class="t" style="left:1356.81px;top:1055.97px;font-size:21.30px;color:#000;">53,000.00</div>
<div class="t" style="left:1582.03px;top:1055.97px;font-size:21.30px;color:#000;">7,69,471.00</div>
<div class="t" style="left:1854.11px;top:1055.97px;font-size:21.30px;color:#000;">12,99,471.00</div>
<div class="t" style="left:66.50px;top:1086.12px;font-size:21.58px;color:#000;transform:scaleX(0.9915);transform-origin:0 0;">Nil-Rated and Exempt Sales</div>
<div class="t" style="left:617.80px;top:1086.12px;font-size:21.58px;color:#000;transform:scaleX(0.9574);transform-origin:0 0;">Supply Value - GSTR-1</div>
<div class="t" style="left:1095.43px;top:1086.97px;font-size:21.30px;color:#000;">1,59,000.00</div>
<div class="t" style="left:1356.81px;top:1086.97px;font-size:21.30px;color:#000;">53,000.00</div>
<div class="t" style="left:1582.03px;top:1086.97px;font-size:21.30px;color:#000;">7,69,471.00</div>
<div class="t" style="left:1854.11px;top:1086.97px;font-size:21.30px;color:#000;">12,99,471.00</div>
<div class="a" style="left:62px;top:1110px;width:1926px;height:32px;background:#bdd7ee;"></div>
<div class="t" style="left:66.50px;top:1117.42px;font-size:21.58px;color:#000;font-weight:bold;transform:scaleX(0.9564);transform-origin:0 0;">Nil-Rated and Exempt Sales</div>
<div class="t" style="left:617.80px;top:1117.42px;font-size:21.58px;color:#000;font-weight:bold;transform:scaleX(0.9648);transform-origin:0 0;">Supply Value - Difference</div>
<div class="t" style="left:1177.42px;top:1117.88px;font-size:21.40px;color:#000;font-weight:bold;">-</div>
<div class="t" style="left:1421.02px;top:1117.88px;font-size:21.40px;color:#000;font-weight:bold;">-</div>
<div class="t" style="left:1664.02px;top:1117.88px;font-size:21.40px;color:#000;font-weight:bold;">-</div>
<div class="t" style="left:1947.92px;top:1117.88px;font-size:21.40px;color:#000;font-weight:bold;">-</div>
<div class="a" style="left:60px;top:395px;width:557px;height:36px;border:2.5px solid #217346;box-sizing:border-box;"></div>
<div class="a" style="left:609px;top:423px;width:8px;height:8px;background:#217346;border:1px solid #fff;box-sizing:content-box;"></div>
<div class="a" style="left:974px;top:329px;width:2px;height:1120px;background:#9a9a9a;"></div>
<div class="a" style="left:1px;top:397px;width:2008px;height:2px;background:#9a9a9a;"></div>
<div class="t" style="left:328.78px;top:336.39px;font-size:27.00px;color:#217346;font-weight:bold;">A</div>
<div class="t" style="left:787.02px;top:336.39px;font-size:27.00px;color:#444444;">B</div>
<div class="t" style="left:1089.51px;top:336.39px;font-size:27.00px;color:#444444;">L</div>
<div class="t" style="left:1328.23px;top:336.39px;font-size:27.00px;color:#444444;">M</div>
<div class="t" style="left:1572.78px;top:336.39px;font-size:27.00px;color:#444444;">N</div>
<div class="t" style="left:1835.47px;top:336.39px;font-size:27.00px;color:#444444;">O</div>
<div class="t" style="left:23.87px;top:367.97px;font-size:27.50px;color:#444444;">1</div>
<div class="t" style="left:23.87px;top:399.47px;font-size:27.50px;color:#217346;font-weight:bold;">2</div>
<div class="t" style="left:23.87px;top:430.47px;font-size:27.50px;color:#444444;">3</div>
<div class="t" style="left:23.87px;top:461.47px;font-size:27.50px;color:#444444;">4</div>
<div class="t" style="left:23.87px;top:492.47px;font-size:27.50px;color:#444444;">5</div>
<div class="t" style="left:23.87px;top:523.47px;font-size:27.50px;color:#444444;">6</div>
<div class="t" style="left:23.87px;top:554.47px;font-size:27.50px;color:#444444;">7</div>
<div class="t" style="left:23.87px;top:585.47px;font-size:27.50px;color:#444444;">8</div>
<div class="t" style="left:23.87px;top:616.47px;font-size:27.50px;color:#444444;">9</div>
<div class="t" style="left:16.24px;top:647.47px;font-size:27.50px;color:#444444;">10</div>
<div class="t" style="left:17.20px;top:678.47px;font-size:27.50px;color:#444444;">11</div>
<div class="t" style="left:16.24px;top:709.47px;font-size:27.50px;color:#444444;">12</div>
<div class="t" style="left:16.24px;top:740.47px;font-size:27.50px;color:#444444;">13</div>
<div class="t" style="left:16.24px;top:771.47px;font-size:27.50px;color:#444444;">14</div>
<div class="t" style="left:16.24px;top:802.47px;font-size:27.50px;color:#444444;">15</div>
<div class="t" style="left:16.24px;top:833.47px;font-size:27.50px;color:#444444;">16</div>
<div class="t" style="left:16.24px;top:864.47px;font-size:27.50px;color:#444444;">17</div>
<div class="t" style="left:16.24px;top:895.47px;font-size:27.50px;color:#444444;">18</div>
<div class="t" style="left:16.24px;top:926.47px;font-size:27.50px;color:#444444;">19</div>
<div class="t" style="left:16.24px;top:957.47px;font-size:27.50px;color:#444444;">20</div>
<div class="t" style="left:16.24px;top:988.47px;font-size:27.50px;color:#444444;">21</div>
<div class="t" style="left:16.24px;top:1019.47px;font-size:27.50px;color:#444444;">22</div>
<div class="t" style="left:16.24px;top:1050.47px;font-size:27.50px;color:#444444;">23</div>
<div class="t" style="left:16.24px;top:1081.47px;font-size:27.50px;color:#444444;">24</div>
<div class="t" style="left:16.24px;top:1112.47px;font-size:27.50px;color:#444444;">25</div>
<div class="t" style="left:16.24px;top:1143.47px;font-size:27.50px;color:#444444;">26</div>
<div class="t" style="left:16.24px;top:1174.47px;font-size:27.50px;color:#444444;">27</div>
<div class="t" style="left:16.24px;top:1205.47px;font-size:27.50px;color:#444444;">28</div>
<div class="t" style="left:16.24px;top:1236.47px;font-size:27.50px;color:#444444;">29</div>
<div class="t" style="left:16.24px;top:1267.47px;font-size:27.50px;color:#444444;">30</div>
<div class="t" style="left:16.24px;top:1298.47px;font-size:27.50px;color:#444444;">31</div>
<div class="t" style="left:16.24px;top:1329.47px;font-size:27.50px;color:#444444;">32</div>
<div class="t" style="left:16.24px;top:1360.47px;font-size:27.50px;color:#444444;">33</div>
<div class="t" style="left:16.24px;top:1391.47px;font-size:27.50px;color:#444444;">34</div>
<div class="t" style="left:16.24px;top:1422.47px;font-size:27.50px;color:#444444;">35</div>
<div class="a" style="left:61px;top:459px;width:561px;height:33.5px;border:3px solid #ff2a6a;box-sizing:border-box;border-radius:2px;"></div>
<div class="a" style="left:63px;top:583px;width:554px;height:33px;border:3px solid #ff2a6a;box-sizing:border-box;border-radius:2px;"></div>
<div class="a" style="left:63px;top:893px;width:556px;height:33px;border:3px solid #ff2a6a;box-sizing:border-box;border-radius:2px;"></div>
<div class="a" style="left:1459.5px;top:459px;width:245.0px;height:33.5px;border:3px solid #ff2a6a;box-sizing:border-box;border-radius:2px;"></div>
<div class="a" style="left:1460.5px;top:583px;width:240.5px;height:33px;border:3px solid #ff2a6a;box-sizing:border-box;border-radius:2px;"></div>
<div class="a" style="left:1px;top:1449px;width:2008px;height:0px;background:#f3f3f3;"></div>
<div class="a" style="left:0px;top:0px;width:2048px;height:1px;background:#217346;"></div>
<div class="a" style="left:0px;top:0px;width:1px;height:1536px;background:#217346;"></div>
<div class="a" style="left:2047px;top:0px;width:1px;height:1536px;background:#217346;"></div>
<div class="a" style="left:2046px;top:1449px;width:1px;height:42px;background:#fff;"></div>
</body></html>
